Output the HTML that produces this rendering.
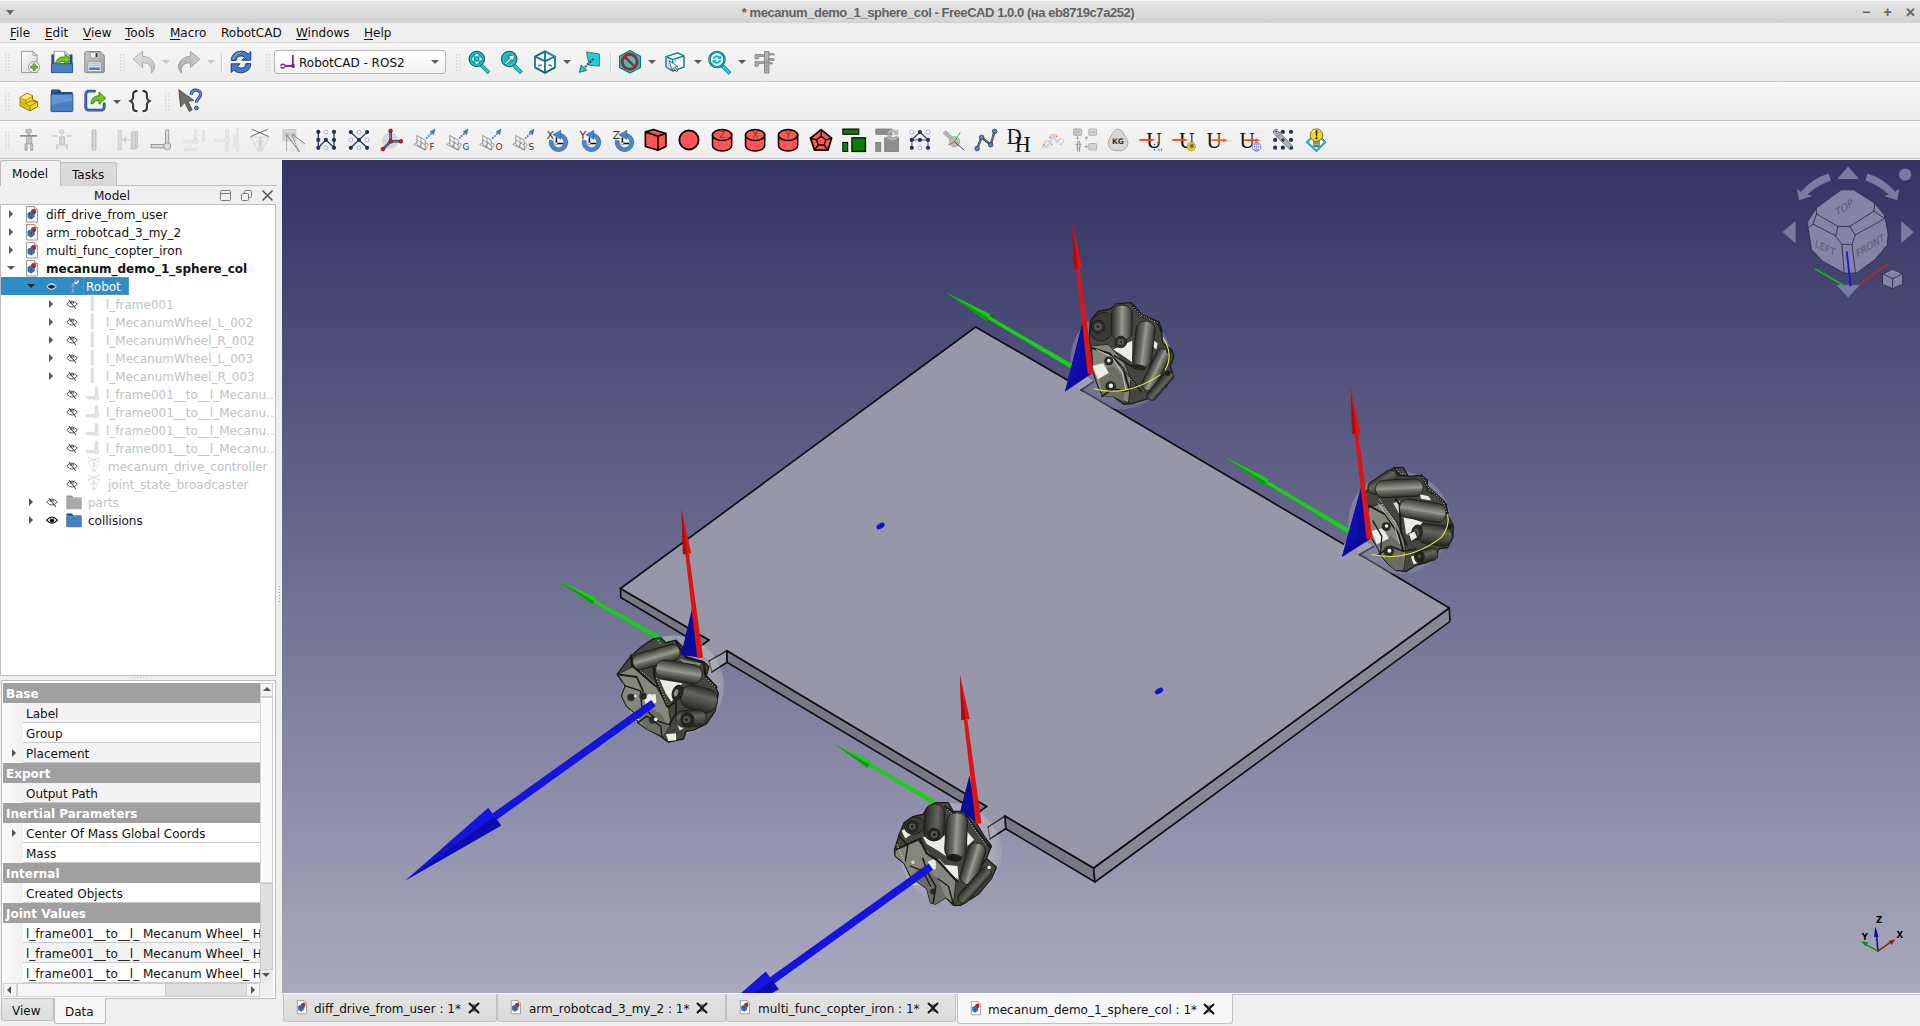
<!DOCTYPE html><html><head><meta charset="utf-8"><title>FreeCAD</title><style>
*{box-sizing:border-box}
html,body{margin:0;padding:0}
body{width:1920px;height:1026px;position:relative;overflow:hidden;background:#efefef;
 font-family:"DejaVu Sans","Liberation Sans",sans-serif;font-size:12px;color:#111;}
.abs{position:absolute}
.t{position:absolute;white-space:nowrap;line-height:14px;height:14px;margin-top:1px}
#title{left:0;top:0;width:1920px;height:23px;background:linear-gradient(#e4e4e4,#d3d3d3);border-top:1px solid #fcfcfc}
#title .tx{left:0;width:1876px;top:4px;text-align:center;font-family:"Liberation Sans","DejaVu Sans",sans-serif;font-weight:bold;font-size:13px;color:#626262;letter-spacing:-0.45px}
#menu{left:0;top:23px;width:1920px;height:19px;background:#efefef}
#menu .t{top:2px;font-size:12px}
#menu u{text-decoration:underline;text-underline-offset:1.5px}
.hl{position:absolute;left:0;width:1920px;height:1px}
.grip{position:absolute;width:5px;height:17px;background-image:radial-gradient(circle,#c2c2c2 0.8px,transparent 1px);background-size:3px 3px;background-position:0 0}
.ic{position:absolute;width:24px;height:24px;overflow:visible}
.dd{position:absolute;width:0;height:0;border-left:4px solid transparent;border-right:4px solid transparent;border-top:4px solid #5c5c5c}
.dd.dis{border-top-color:#c8c8c8}
</style></head><body><div id="title" class="abs"><div class="abs" style="left:6px;top:9px;width:0;height:0;border-left:4.5px solid transparent;border-right:4.5px solid transparent;border-top:5px solid #6a6a6a"></div><div class="t tx">* mecanum_demo_1_sphere_col - FreeCAD 1.0.0 (на eb8719c7a252)</div><div class="t" style="left:1862px;top:3px;font-size:14px;color:#666;font-weight:bold;font-family:'Liberation Sans',sans-serif">−</div><div class="t" style="left:1883.5px;top:3px;font-size:14px;color:#666;font-weight:bold;font-family:'Liberation Sans',sans-serif">+</div><div class="t" style="left:1904.500px;top:3.800px;font-size:13px;color:#666;font-weight:bold;font-family:'Liberation Sans',sans-serif">✕</div></div><div id="menu" class="abs"><div class="t" style="left:10px"><u>F</u>ile</div><div class="t" style="left:45px"><u>E</u>dit</div><div class="t" style="left:83px"><u>V</u>iew</div><div class="t" style="left:125px"><u>T</u>ools</div><div class="t" style="left:170px"><u>M</u>acro</div><div class="t" style="left:221px">RobotCAD</div><div class="t" style="left:296px"><u>W</u>indows</div><div class="t" style="left:364px"><u>H</u>elp</div></div><div class="abs" style="left:0;top:42px;width:1920px;height:39px;background:linear-gradient(#f6f6f6,#ececec)"></div><div class="abs" style="left:0;top:82px;width:1920px;height:38px;background:linear-gradient(#f6f6f6,#ececec)"></div><div class="abs" style="left:0;top:121px;width:1920px;height:37px;background:linear-gradient(#f6f6f6,#ececec)"></div><div class="hl" style="top:42px;background:#d9d9d9"></div><div class="hl" style="top:81px;background:#c6c6c6"></div><div class="hl" style="top:120px;background:#c6c6c6"></div><div class="hl" style="top:158px;background:#c3c3c3"></div><div class="hl" style="top:159px;background:#f3f3f3"></div><svg class="abs" style="left:5px;top:54px" width="6" height="18" viewBox="0 0 6 18"><rect x="0.2" y="0.2" width="1.100" height="1.100" fill="#c4c4c4"/><rect x="3.3000000000000003" y="0.2" width="1.100" height="1.100" fill="#c4c4c4"/><rect x="0.2" y="3.3000000000000003" width="1.100" height="1.100" fill="#c4c4c4"/><rect x="3.3000000000000003" y="3.3000000000000003" width="1.100" height="1.100" fill="#c4c4c4"/><rect x="0.2" y="6.4" width="1.100" height="1.100" fill="#c4c4c4"/><rect x="3.3000000000000003" y="6.4" width="1.100" height="1.100" fill="#c4c4c4"/><rect x="0.2" y="9.5" width="1.100" height="1.100" fill="#c4c4c4"/><rect x="3.3000000000000003" y="9.5" width="1.100" height="1.100" fill="#c4c4c4"/><rect x="0.2" y="12.6" width="1.100" height="1.100" fill="#c4c4c4"/><rect x="3.3000000000000003" y="12.6" width="1.100" height="1.100" fill="#c4c4c4"/><rect x="0.2" y="15.7" width="1.100" height="1.100" fill="#c4c4c4"/><rect x="3.3000000000000003" y="15.7" width="1.100" height="1.100" fill="#c4c4c4"/></svg><svg class="ic" style="left:18px;top:50px" viewBox="0 0 24 24"><defs><linearGradient id="pg" x1="0" y1="0" x2="1" y2="1"><stop offset="0" stop-color="#ffffff"/><stop offset="1" stop-color="#d4d4d4"/></linearGradient></defs><path d="M3.5 1.4h11.5l4 4v17.2h-15.5z" fill="url(#pg)" stroke="#8c8c8c" stroke-width="0.9"/><path d="M15 1.4v4h4z" fill="#f4f4f4" stroke="#8c8c8c" stroke-width="0.8"/><circle cx="16.1" cy="17.1" r="5.5" fill="#fbfbfb" stroke="#8e8e8e" stroke-width="0.9"/><path d="M16.1 13.4v7.4M12.4 17.1h7.4" stroke="#2f7a10" stroke-width="2.8"/><path d="M16.1 13.9v6.400M12.9 17.1h6.400" stroke="#6fd016" stroke-width="1.400"/></svg><svg class="ic" style="left:50px;top:50px" viewBox="0 0 24 24"><path d="M1.4 4.5h3v18h-3zM19.5 4.5h3v18h-3z" fill="#1d4a8c"/><path d="M4.2 1.3h10.3l4 3.6v11h-14.3z" fill="#fdfdfd" stroke="#8c8c8c" stroke-width="0.8"/><path d="M14.5 1.3v3.6h4z" fill="#e6e6e6" stroke="#8c8c8c" stroke-width="0.7"/><path d="M1.4 13.6h21.1v9h-21.1z" fill="#4a80c2" stroke="#1d4a8c" stroke-width="0.8"/><path d="M5.5 13.6c0.8-5 5-7.6 9.4-6.3l0.6-2.6 5.3 5.2-6.6 4.6 0.3-2.8c-2.4-0.6-4.8 0-6.2 1.9z" fill="#6fc81c" stroke="#2f7a10" stroke-width="0.9" stroke-linejoin="round"/></svg><svg class="ic" style="left:83px;top:50px" viewBox="0 0 24 24"><defs><linearGradient id="sg" x1="0" y1="0" x2="1" y2="1"><stop offset="0" stop-color="#c8c8c8"/><stop offset="1" stop-color="#a0a0a0"/></linearGradient></defs><path d="M3.400 1.500h13.800l4.100 4.100v15.500a1.600 1.600 0 0 1-1.600 1.600h-16.300a1.600 1.600 0 0 1-1.600-1.600v-18a1.600 1.600 0 0 1 1.600-1.600z" fill="url(#sg)" stroke="#7e7e7e" stroke-width="0.900"/><rect x="7.400" y="2.400" width="8.600" height="5.400" rx="0.500" fill="#efefef" stroke="#8a8a8a" stroke-width="0.600"/><rect x="12.600" y="3.200" width="2" height="3.800" fill="#333"/><rect x="4.800" y="11.800" width="13.400" height="9.800" rx="0.800" fill="#e8e8e8" stroke="#8a8a8a" stroke-width="0.700"/><path d="M6 13.800h11M6 15.600h11" stroke="#b0b0b0" stroke-width="0.900"/><rect x="6.200" y="17.400" width="10.600" height="2.600" fill="#3f7fc4"/></svg><svg class="abs" style="left:120px;top:54px" width="6" height="18" viewBox="0 0 6 18"><rect x="0.2" y="0.2" width="1.100" height="1.100" fill="#c4c4c4"/><rect x="3.3000000000000003" y="0.2" width="1.100" height="1.100" fill="#c4c4c4"/><rect x="0.2" y="3.3000000000000003" width="1.100" height="1.100" fill="#c4c4c4"/><rect x="3.3000000000000003" y="3.3000000000000003" width="1.100" height="1.100" fill="#c4c4c4"/><rect x="0.2" y="6.4" width="1.100" height="1.100" fill="#c4c4c4"/><rect x="3.3000000000000003" y="6.4" width="1.100" height="1.100" fill="#c4c4c4"/><rect x="0.2" y="9.5" width="1.100" height="1.100" fill="#c4c4c4"/><rect x="3.3000000000000003" y="9.5" width="1.100" height="1.100" fill="#c4c4c4"/><rect x="0.2" y="12.6" width="1.100" height="1.100" fill="#c4c4c4"/><rect x="3.3000000000000003" y="12.6" width="1.100" height="1.100" fill="#c4c4c4"/><rect x="0.2" y="15.7" width="1.100" height="1.100" fill="#c4c4c4"/><rect x="3.3000000000000003" y="15.7" width="1.100" height="1.100" fill="#c4c4c4"/></svg><svg class="ic" style="left:132px;top:50px" viewBox="0 0 24 24"><defs><linearGradient id="ug" x1="0" y1="0" x2="1" y2="1"><stop offset="0" stop-color="#e4e4e4"/><stop offset="1" stop-color="#c4c4c4"/></linearGradient></defs><path d="M1.2 9.2L10.6 1.2v5.2c7 0 12.4 5 11.8 10.8-0.3 2.6-1.6 4.6-3 5.9 1.2-6-1.6-10.6-8.8-10.4v5z" fill="url(#ug)" stroke="#a6a6a6" stroke-width="0.9" stroke-linejoin="round"/></svg><div class="dd dis" style="left:162px;top:60px"></div><svg class="ic" style="left:177px;top:50px" viewBox="0 0 24 24"><defs><linearGradient id="rdg" x1="1" y1="0" x2="0" y2="1"><stop offset="0" stop-color="#d0d0d0"/><stop offset="1" stop-color="#acacac"/></linearGradient></defs><path d="M22.8 9.2L13.4 1.2v5.2c-7 0-12.4 5-11.8 10.8 0.3 2.6 1.6 4.6 3 5.9-1.2-6 1.6-10.6 8.8-10.4v5z" fill="url(#rdg)" stroke="#9a9a9a" stroke-width="0.9" stroke-linejoin="round"/></svg><div class="dd dis" style="left:207px;top:60px"></div><div class="abs" style="left:221px;top:53px;width:1px;height:19px;background:#cdcdcd"></div><div class="abs" style="left:222px;top:53px;width:1px;height:19px;background:#fbfbfb"></div><svg class="ic" style="left:229px;top:50px" viewBox="0 0 24 24"><path d="M2.2 10.4c0-5.4 4.6-9.2 9.8-9.2 3 0 5.4 1 7.2 2.8l2.6-2.4v8.6h-9l3-2.8c-1-1-2.4-1.5-3.8-1.5-2.8 0-4.6 1.8-4.9 4.5z" fill="#3f80c4" stroke="#15305c" stroke-width="0.9" stroke-linejoin="round"/><path d="M21.8 13.6c0 5.4-4.6 9.2-9.8 9.2-3 0-5.4-1-7.2-2.8l-2.6 2.4v-8.6h9l-3 2.8c1 1 2.4 1.5 3.8 1.5 2.8 0 4.6-1.8 4.9-4.5z" fill="#3f80c4" stroke="#15305c" stroke-width="0.9" stroke-linejoin="round"/><path d="M4 9c1-4 4.4-6.4 8-6.4" stroke="#8fb8e4" stroke-width="1" fill="none"/></svg><svg class="abs" style="left:266px;top:54px" width="6" height="18" viewBox="0 0 6 18"><rect x="0.2" y="0.2" width="1.100" height="1.100" fill="#c4c4c4"/><rect x="3.3000000000000003" y="0.2" width="1.100" height="1.100" fill="#c4c4c4"/><rect x="0.2" y="3.3000000000000003" width="1.100" height="1.100" fill="#c4c4c4"/><rect x="3.3000000000000003" y="3.3000000000000003" width="1.100" height="1.100" fill="#c4c4c4"/><rect x="0.2" y="6.4" width="1.100" height="1.100" fill="#c4c4c4"/><rect x="3.3000000000000003" y="6.4" width="1.100" height="1.100" fill="#c4c4c4"/><rect x="0.2" y="9.5" width="1.100" height="1.100" fill="#c4c4c4"/><rect x="3.3000000000000003" y="9.5" width="1.100" height="1.100" fill="#c4c4c4"/><rect x="0.2" y="12.6" width="1.100" height="1.100" fill="#c4c4c4"/><rect x="3.3000000000000003" y="12.6" width="1.100" height="1.100" fill="#c4c4c4"/><rect x="0.2" y="15.7" width="1.100" height="1.100" fill="#c4c4c4"/><rect x="3.3000000000000003" y="15.7" width="1.100" height="1.100" fill="#c4c4c4"/></svg><div class="abs" style="left:274px;top:50px;width:172px;height:24px;border:1px solid #b4b4b4;border-radius:3px;background:linear-gradient(#ffffff,#f2f2f2)"></div><svg class="abs" style="left:280px;top:54px" width="16" height="16" viewBox="0 0 16 16"><path d="M12.800 1v11" stroke="#4a2a8a" stroke-width="1.700"/><path d="M12.800 1v11" stroke="#3a6ad0" stroke-width="0.700" stroke-dasharray="1.500 1.500"/><path d="M12.800 12h-6" stroke="#7a1a8a" stroke-width="1.800"/><circle cx="13" cy="12" r="1.900" fill="#8a1a8a"/><path d="M6.800 12c-1.500 0-2.200-1.200-3.400-1.600-1.200-0.400-2.200 0.200-2.400 1M6.800 12c-1.500 0-2.200 1.200-3.400 1.800-1 0.400-2 0.200-2.400-0.600" fill="none" stroke="#8a1a8a" stroke-width="1.400" stroke-linecap="round"/></svg><div class="t" style="left:299px;top:55px;font-size:12px">RobotCAD - ROS2</div><div class="dd" style="left:430.5px;top:60px"></div><svg class="abs" style="left:456px;top:54px" width="6" height="18" viewBox="0 0 6 18"><rect x="0.2" y="0.2" width="1.100" height="1.100" fill="#c4c4c4"/><rect x="3.3000000000000003" y="0.2" width="1.100" height="1.100" fill="#c4c4c4"/><rect x="0.2" y="3.3000000000000003" width="1.100" height="1.100" fill="#c4c4c4"/><rect x="3.3000000000000003" y="3.3000000000000003" width="1.100" height="1.100" fill="#c4c4c4"/><rect x="0.2" y="6.4" width="1.100" height="1.100" fill="#c4c4c4"/><rect x="3.3000000000000003" y="6.4" width="1.100" height="1.100" fill="#c4c4c4"/><rect x="0.2" y="9.5" width="1.100" height="1.100" fill="#c4c4c4"/><rect x="3.3000000000000003" y="9.5" width="1.100" height="1.100" fill="#c4c4c4"/><rect x="0.2" y="12.6" width="1.100" height="1.100" fill="#c4c4c4"/><rect x="3.3000000000000003" y="12.6" width="1.100" height="1.100" fill="#c4c4c4"/><rect x="0.2" y="15.7" width="1.100" height="1.100" fill="#c4c4c4"/><rect x="3.3000000000000003" y="15.7" width="1.100" height="1.100" fill="#c4c4c4"/></svg><svg class="ic" style="left:466.7px;top:50px" viewBox="0 0 24 24"><path d="M14.5 13.2l8.3 8.3-2.2 2.2-8.3-8.3z" fill="#22d0d4" stroke="#0b6d73" stroke-width="0.9" stroke-linejoin="round"/><circle cx="9.8" cy="9" r="7.6" fill="#22d0d4" stroke="#0b6d73" stroke-width="1.4"/><circle cx="9.8" cy="9" r="5.4" fill="#19b4ba" stroke="#0b6d73" stroke-width="0.6"/><path d="M9.8 3.6l2.2 2.6h-4.4zM9.8 14.4l2.2-2.6h-4.4zM4.4 9l2.6-2.2v4.4zM15.2 9l-2.6-2.2v4.4z" fill="#fff"/><rect x="8" y="7.2" width="3.6" height="3.6" fill="#22d0d4" stroke="#0b6d73" stroke-width="0.5"/></svg><svg class="ic" style="left:499.7px;top:50px" viewBox="0 0 24 24"><path d="M14 13.2l8.3 8.3-2.2 2.2-8.3-8.3z" fill="#22d0d4" stroke="#0b6d73" stroke-width="0.9" stroke-linejoin="round"/><circle cx="9.2" cy="9" r="7.6" fill="#22d0d4" stroke="#0b6d73" stroke-width="1.4"/><circle cx="9.2" cy="9" r="5.4" fill="#19b4ba"/><path d="M4.6 13.6l5.6-5.6-1.8-1.8 6.2-1.4-1.4 6.2-1.8-1.8-5.6 5.6z" fill="#fff" stroke="#444" stroke-width="0.7" stroke-linejoin="round"/></svg><svg class="ic" style="left:533px;top:50px" viewBox="0 0 24 24"><path d="M12 1.4l10 5.2v10.8l-10 5.4-10-5.4v-10.800z" fill="#fafafa" stroke="#0b6d73" stroke-width="1.9" stroke-linejoin="round"/><path d="M2 6.6l10 4.6 10-4.600M12 11.2v11.600M12 1.400v9" stroke="#0b6d73" stroke-width="1.7" fill="none"/><path d="M12 1.4l10 5.2v10.800M2 6.600v10.800" stroke="#22d0d4" stroke-width="0.6" fill="none"/><path d="M5.400 16.600c0.600-1.600 2-1.800 3.400-1.200M18.600 16.600c-0.600-1.600-2-1.800-3.400-1.200" stroke="#0b6d73" stroke-width="1.2" fill="none"/></svg><div class="dd" style="left:563px;top:60px"></div><svg class="ic" style="left:578.5px;top:50px" viewBox="0 0 24 24"><path d="M7.500 1.900l12.900 2.100v12.100l-10.400-0.850z" fill="#22d0d4" stroke="#4a6a70" stroke-width="0.900" stroke-linejoin="round"/><path d="M14.500 8.600l-8.600 8.500" stroke="#123" stroke-width="1.800" stroke-dasharray="2.200 1.200"/><path d="M14.500 8.600l-8.600 8.500" stroke="#22d0d4" stroke-width="0.700"/><path d="M0.400 22.300l1.800-7.200 5.600 5.200z" fill="#22d0d4" stroke="#1a4a50" stroke-width="0.800" stroke-linejoin="round"/></svg><div class="abs" style="left:610px;top:53px;width:1px;height:19px;background:#cdcdcd"></div><div class="abs" style="left:611px;top:53px;width:1px;height:19px;background:#fbfbfb"></div><svg class="ic" style="left:618px;top:50px" viewBox="0 0 24 24"><path d="M12 0.600l10.400 5.600v11.200l-10.400 5.600-10.400-5.600v-11.200z" fill="#22d0d4" stroke="#0b6d73" stroke-width="1.100" stroke-linejoin="round"/><path d="M12 2.400l8.800 4.700v9.400l-8.800 4.700-8.800-4.700v-9.400z" fill="none" stroke="#14a8b0" stroke-width="0.700"/><circle cx="11.700" cy="11.700" r="7.200" fill="none" stroke="#d41414" stroke-width="2.500"/><path d="M6.600 6.600l10.200 10.200" stroke="#d41414" stroke-width="2.500"/><circle cx="11.700" cy="11.700" r="8.500" fill="none" stroke="#6a0a0a" stroke-width="0.500"/></svg><div class="dd" style="left:648px;top:60px"></div><svg class="ic" style="left:663px;top:50px" viewBox="0 0 24 24"><g transform="translate(12 12) scale(0.9) translate(-12 -12.200)"><path d="M2 6.200l13-4.200 7 3.400v12.400l-12.600 4.400-7.400-4.400z" fill="#eaf6f8" stroke="#0b6d73" stroke-width="1.500" stroke-linejoin="round"/><path d="M2 6.200l7.400 3.400 12.600-4.200M9.400 9.600v12.600" stroke="#0b6d73" stroke-width="1.500" fill="none"/><path d="M2 6.200l13-4.200 7 3.400v12.400l-12.600 4.400-7.400-4.400z M9.400 9.600v12.600M2 6.200l7.400 3.400 12.600-4.200" fill="none" stroke="#22d0d4" stroke-width="0.500" stroke-dasharray="1.500 1.500"/><rect x="3.400" y="9.200" width="5" height="9.500" fill="#a8dce8" opacity="0.800"/><rect x="9.900" y="9.600" width="3" height="4" fill="#a8dce8"/><path d="M5.600 10.800l9.600 6.600-3.400 0.300 3.200 4.400-1.500 1-3-4.500-2 2.600z" fill="#f4f4f4" stroke="#3a3a4a" stroke-width="0.800" stroke-linejoin="round"/></g></svg><div class="dd" style="left:693.5px;top:60px"></div><svg class="ic" style="left:708px;top:50px" viewBox="0 0 24 24"><path d="M14.200 13.600l8.700 8.500-2.200 2.200-8.700-8.500z" fill="#22d0d4" stroke="#0b6d73" stroke-width="0.900" stroke-linejoin="round"/><circle cx="9" cy="9.500" r="7.600" fill="#f4fbfc" stroke="#0b6d73" stroke-width="2.400"/><circle cx="9" cy="9.500" r="7.600" fill="none" stroke="#22d0d4" stroke-width="0.800"/><path d="M4.800 8.800a4.300 4.300 0 0 1 7.200-2.400l1.400-1.300v4.200h-4.200l1.300-1.400a2.400 2.400 0 0 0-3.800 1z" fill="#19b4ba"/><path d="M13.200 10.200a4.300 4.300 0 0 1-7.200 2.400l-1.400 1.300v-4.200h4.200l-1.300 1.400a2.400 2.400 0 0 0 3.800-1z" fill="#19b4ba"/></svg><div class="dd" style="left:738px;top:60px"></div><svg class="ic" style="left:753px;top:50px" viewBox="0 0 24 24"><path d="M11.500 1.500h4.500v21.500h-4.500z" fill="#b4b4b4" stroke="#7a7a7a" stroke-width="0.800"/><path d="M2 4.500h9.500v2h-5.500l-1 2.500h-3zM2 11.500h9.500v2h-5.500l-1 2.800h-3z" fill="#a8a8a8" stroke="#7a7a7a" stroke-width="0.700"/><path d="M16 3.500h4.500l1 1.500h-5.500zM16 8.500h4.500l1 2h-5.500zM16 12.500h3l0.500 1.500h-3.500z" fill="#a8a8a8" stroke="#7a7a7a" stroke-width="0.600"/><path d="M12.500 10h1.500M12.500 12h2.500M12.500 14h1.500M12.500 16h2.500M12.500 18h1.500M12.500 20h2.500" stroke="#666" stroke-width="0.600"/></svg><svg class="abs" style="left:5px;top:93px" width="6" height="18" viewBox="0 0 6 18"><rect x="0.2" y="0.2" width="1.100" height="1.100" fill="#c4c4c4"/><rect x="3.3000000000000003" y="0.2" width="1.100" height="1.100" fill="#c4c4c4"/><rect x="0.2" y="3.3000000000000003" width="1.100" height="1.100" fill="#c4c4c4"/><rect x="3.3000000000000003" y="3.3000000000000003" width="1.100" height="1.100" fill="#c4c4c4"/><rect x="0.2" y="6.4" width="1.100" height="1.100" fill="#c4c4c4"/><rect x="3.3000000000000003" y="6.4" width="1.100" height="1.100" fill="#c4c4c4"/><rect x="0.2" y="9.5" width="1.100" height="1.100" fill="#c4c4c4"/><rect x="3.3000000000000003" y="9.5" width="1.100" height="1.100" fill="#c4c4c4"/><rect x="0.2" y="12.6" width="1.100" height="1.100" fill="#c4c4c4"/><rect x="3.3000000000000003" y="12.6" width="1.100" height="1.100" fill="#c4c4c4"/><rect x="0.2" y="15.7" width="1.100" height="1.100" fill="#c4c4c4"/><rect x="3.3000000000000003" y="15.7" width="1.100" height="1.100" fill="#c4c4c4"/></svg><svg class="ic" style="left:17px;top:89px" viewBox="0 0 24 24"><g transform="translate(12.000 13.000) scale(0.860) translate(-12.000 -13.800)"><path d="M1.700 8.200l8.200-4.600 6.200 3v4.200l5.900 2.800v5.800l-8.800 4.600-11.500-5.600z" fill="#f4d820" stroke="#8a6a08" stroke-width="1.100" stroke-linejoin="round"/><path d="M1.700 8.200l6.400 3.200 8-4.800M8.100 11.400v4.400M8.100 15.800l5.900-3.200 8 1M8.100 15.800l5.100 2.600 8.800-4.800M13.200 18.400v5.600M1.700 13.600l6.400 3" stroke="#8a6a08" stroke-width="1" fill="none"/><path d="M2.400 8.800l5.200 2.600v4.400l5 2.600v4.600l-10.200-5z" fill="#e0b810" opacity="0.800"/><path d="M9.900 4.200l5.600 2.700-7.400 4.400-5.600-2.800z" fill="#fbf080"/></g></svg><svg class="ic" style="left:50px;top:89px" viewBox="0 0 24 24"><path d="M1 1.600a1 1 0 0 1 1-1h7.500l2 2.400h11v4h-21.500z" fill="#1d4a8c"/><path d="M2.500 2.600h5" stroke="#4a80c2" stroke-width="0.900" stroke-dasharray="1.200 0.800"/><rect x="1" y="4.800" width="21.800" height="17.800" rx="0.800" fill="#4a80c2" stroke="#1d4a8c" stroke-width="0.900"/><path d="M1.500 6h20.800v6c-7 0.500-14 2-20.800 4z" fill="#6a9ad4" opacity="0.800"/></svg><svg class="ic" style="left:84px;top:89px" viewBox="0 0 24 24"><path d="M10.500 2.200h-5.700a3 3 0 0 0-3 3v13a3 3 0 0 0 3 3h12.400a3 3 0 0 0 3-3v-3.200" fill="none" stroke="#1d4a8c" stroke-width="2.800" stroke-linecap="round"/><path d="M10.500 2.200h-5.700a3 3 0 0 0-3 3v13a3 3 0 0 0 3 3h12.400a3 3 0 0 0 3-3v-3.200" fill="none" stroke="#4a80c2" stroke-width="1"/><path d="M7 14.600c0.400-5 3.600-7.800 8-7.800v-3.600l6.800 6-6.800 6v-3.800c-2.800-0.200-4.800 1-5.800 3.200z" fill="#6fc81c" stroke="#2f7a10" stroke-width="0.900" stroke-linejoin="round"/></svg><div class="dd" style="left:113px;top:99.5px"></div><svg class="ic" style="left:128px;top:89px" viewBox="0 0 24 24"><path d="M9.500 1.800c-3.600 0-4.400 1.400-4.400 3.800v2.800c0 1.800-0.800 2.600-2.600 2.600v2c1.800 0 2.600 0.800 2.600 2.600v2.800c0 2.400 0.800 3.800 4.400 3.800M14.500 1.800c3.600 0 4.400 1.400 4.400 3.800v2.800c0 1.800 0.800 2.600 2.600 2.600v2c-1.800 0-2.600 0.800-2.600 2.600v2.800c0 2.400-0.800 3.800-4.400 3.800" fill="none" stroke="#fff" stroke-width="4.200"/><path d="M9.500 1.800c-3.600 0-4.400 1.400-4.400 3.800v2.800c0 1.800-0.800 2.600-2.600 3.600 1.800 1 2.600 1.800 2.600 3.600v2.800c0 2.400 0.800 3.800 4.400 3.800M14.500 1.800c3.600 0 4.400 1.400 4.400 3.800v2.800c0 1.800 0.800 2.600 2.600 3.600-1.800 1-2.600 1.800-2.600 3.600v2.800c0 2.400-0.800 3.800-4.400 3.800" fill="none" stroke="#3a3a3a" stroke-width="2.200"/></svg><svg class="abs" style="left:165px;top:93px" width="6" height="18" viewBox="0 0 6 18"><rect x="0.2" y="0.2" width="1.100" height="1.100" fill="#c4c4c4"/><rect x="3.3000000000000003" y="0.2" width="1.100" height="1.100" fill="#c4c4c4"/><rect x="0.2" y="3.3000000000000003" width="1.100" height="1.100" fill="#c4c4c4"/><rect x="3.3000000000000003" y="3.3000000000000003" width="1.100" height="1.100" fill="#c4c4c4"/><rect x="0.2" y="6.4" width="1.100" height="1.100" fill="#c4c4c4"/><rect x="3.3000000000000003" y="6.4" width="1.100" height="1.100" fill="#c4c4c4"/><rect x="0.2" y="9.5" width="1.100" height="1.100" fill="#c4c4c4"/><rect x="3.3000000000000003" y="9.5" width="1.100" height="1.100" fill="#c4c4c4"/><rect x="0.2" y="12.6" width="1.100" height="1.100" fill="#c4c4c4"/><rect x="3.3000000000000003" y="12.6" width="1.100" height="1.100" fill="#c4c4c4"/><rect x="0.2" y="15.7" width="1.100" height="1.100" fill="#c4c4c4"/><rect x="3.3000000000000003" y="15.7" width="1.100" height="1.100" fill="#c4c4c4"/></svg><svg class="ic" style="left:177px;top:89px" viewBox="0 0 24 24"><path d="M1.800 0.600l15 10.800-6 0.800 4.400 8.600-3 1.600-4.400-8.800-4.200 4.400z" fill="#6e6e68" stroke="#444" stroke-width="0.800" stroke-linejoin="round"/><path d="M14.200 5.600c0.200-3 2.200-4.400 4.800-4.400 2.800 0 4.600 1.800 4.600 4.200 0 3.800-4.200 4-4.200 8" fill="none" stroke="#1d4a8c" stroke-width="3.200"/><path d="M14.200 5.600c0.200-3 2.200-4.400 4.800-4.400 2.800 0 4.600 1.800 4.600 4.200 0 3.800-4.200 4-4.200 8" fill="none" stroke="#5a90d0" stroke-width="1.600"/><circle cx="19.400" cy="19" r="1.900" fill="#5a90d0" stroke="#1d4a8c" stroke-width="0.900"/></svg><svg class="abs" style="left:5px;top:132px" width="6" height="18" viewBox="0 0 6 18"><rect x="0.2" y="0.2" width="1.100" height="1.100" fill="#c4c4c4"/><rect x="3.3000000000000003" y="0.2" width="1.100" height="1.100" fill="#c4c4c4"/><rect x="0.2" y="3.3000000000000003" width="1.100" height="1.100" fill="#c4c4c4"/><rect x="3.3000000000000003" y="3.3000000000000003" width="1.100" height="1.100" fill="#c4c4c4"/><rect x="0.2" y="6.4" width="1.100" height="1.100" fill="#c4c4c4"/><rect x="3.3000000000000003" y="6.4" width="1.100" height="1.100" fill="#c4c4c4"/><rect x="0.2" y="9.5" width="1.100" height="1.100" fill="#c4c4c4"/><rect x="3.3000000000000003" y="9.5" width="1.100" height="1.100" fill="#c4c4c4"/><rect x="0.2" y="12.6" width="1.100" height="1.100" fill="#c4c4c4"/><rect x="3.3000000000000003" y="12.6" width="1.100" height="1.100" fill="#c4c4c4"/><rect x="0.2" y="15.7" width="1.100" height="1.100" fill="#c4c4c4"/><rect x="3.3000000000000003" y="15.7" width="1.100" height="1.100" fill="#c4c4c4"/></svg><svg class="ic" style="left:17px;top:128px" viewBox="0 0 24 24"><rect x="9" y="1.300" width="5.300" height="3.800" rx="0.600" fill="#c4c4c4" stroke="#9a9a9a" stroke-width="0.700"/><rect x="3.300" y="7" width="16.700" height="1.700" fill="#8e8e8e"/><circle cx="11.650" cy="6.300" r="0.900" fill="#8e8e8e"/><rect x="9.600" y="8.600" width="5.200" height="7.300" fill="#c4c4c4" stroke="#9a9a9a" stroke-width="0.700"/><rect x="8" y="15.900" width="2.200" height="6.100" fill="#c4c4c4" stroke="#9a9a9a" stroke-width="0.600"/><rect x="13.700" y="15.900" width="2.200" height="6.100" fill="#c4c4c4" stroke="#9a9a9a" stroke-width="0.600"/><path d="M8 22h2.200M13.700 22h2.200" stroke="#8a8a8a" stroke-width="0.900"/></svg><svg class="ic" style="left:50px;top:128px" viewBox="0 0 24 24"><circle cx="11.500" cy="3.900" r="2.300" fill="#dedede" stroke="#c4c4c4" stroke-width="0.600"/><path d="M2.100 8h5.600M16.300 8h5.600" stroke="#cfcfcf" stroke-width="1.300"/><rect x="9.400" y="9.100" width="5.200" height="7.900" fill="#d2d2d2" stroke="#bcbcbc" stroke-width="0.700"/><path d="M9.400 9.100l2.600-1.500 2.600 1.500" fill="none" stroke="#bcbcbc" stroke-width="0.700"/><rect x="6.300" y="16.400" width="1.500" height="5.200" fill="#d8d8d8" stroke="#c8c8c8" stroke-width="0.500"/><rect x="16.200" y="16.400" width="1.500" height="5.200" fill="#d8d8d8" stroke="#c8c8c8" stroke-width="0.500"/><path d="M7.800 18h1.600M14.600 18h1.600" stroke="#c8c8c8" stroke-width="0.800"/></svg><svg class="ic" style="left:83px;top:128px" viewBox="0 0 24 24"><rect x="9.200" y="2" width="3.700" height="20" rx="0.600" fill="#d9d9d9" stroke="#a8a8a8" stroke-width="0.800"/><path d="M10.300 3v18" stroke="#c4c4c4" stroke-width="0.500" stroke-dasharray="1 1"/></svg><svg class="ic" style="left:116px;top:128px" viewBox="0 0 24 24"><rect x="2.250" y="2" width="3.100" height="20" rx="0.600" fill="#dedede" stroke="#c4c4c4" stroke-width="0.700"/><path d="M13.700 11.700h-5M7 11.700l2.600-2.200v4.400z" stroke="#cfcfcf" stroke-width="1.300" fill="#cfcfcf"/><path d="M15.300 4.400l2.200-1.200h4v16.600l-2.200 1.200h-4z" fill="#d4d4d4" stroke="#bcbcbc" stroke-width="0.700"/><path d="M19.300 4.400v16.600" stroke="#bcbcbc" stroke-width="0.600"/></svg><svg class="ic" style="left:149px;top:128px" viewBox="0 0 24 24"><rect x="16.600" y="2" width="3.200" height="13.500" fill="#dadada" stroke="#8a8a8a" stroke-width="0.800"/><rect x="2" y="16.400" width="14" height="3.400" fill="#dadada" stroke="#8a8a8a" stroke-width="0.800"/><circle cx="18.200" cy="18.200" r="3.600" fill="#dcdcdc" stroke="#8a8a8a" stroke-width="0.800"/></svg><svg class="ic" style="left:182px;top:128px" viewBox="0 0 24 24"><rect x="12.300" y="1.300" width="2.600" height="11" fill="#e6e6e6" stroke="#dadada" stroke-width="0.500"/><rect x="20.600" y="2.300" width="2.100" height="11" fill="#e6e6e6" stroke="#dadada" stroke-width="0.500"/><rect x="1.400" y="12.500" width="10.400" height="1.800" fill="#e6e6e6" stroke="#dadada" stroke-width="0.500"/><circle cx="13.500" cy="13.300" r="2.500" fill="#e8e8e8" stroke="#dadada" stroke-width="0.500"/><rect x="1.900" y="20.600" width="13" height="2" fill="#e6e6e6" stroke="#dadada" stroke-width="0.500"/><path d="M16.500 6l2.500 2.500M8 15.500l1.500 3" stroke="#dcdcdc" stroke-width="0.800"/></svg><svg class="ic" style="left:215px;top:128px" viewBox="0 0 24 24"><rect x="0.200" y="11.700" width="10.400" height="2.100" fill="#e6e6e6" stroke="#dcdcdc" stroke-width="0.500"/><rect x="10.600" y="1.300" width="3.100" height="22.400" fill="#e6e6e6" stroke="#dcdcdc" stroke-width="0.500"/><circle cx="12" cy="12.750" r="2.500" fill="#e8e8e8" stroke="#dadada" stroke-width="0.500"/><rect x="21.600" y="0.250" width="2" height="23.400" fill="#e6e6e6" stroke="#dcdcdc" stroke-width="0.500"/><rect x="18.400" y="7" width="2.100" height="11" fill="#e6e6e6" stroke="#dcdcdc" stroke-width="0.500"/><path d="M16 4.500l2 1.500M16 19l2 1.500" stroke="#dcdcdc" stroke-width="0.800"/></svg><svg class="ic" style="left:248px;top:128px" viewBox="0 0 24 24"><path d="M2.100 9.100l8.900 14.600M20.900 9.100l-7.900 14.600M2.100 9.100h18.800" stroke="#c6c6c6" stroke-width="0.700" fill="none"/><circle cx="12.200" cy="10.600" r="1.500" fill="#d4d4d4"/><rect x="10.600" y="12.200" width="3.200" height="6.400" fill="#d4d4d4"/><path d="M8.400 13.400h7.800" stroke="#d4d4d4" stroke-width="1.300"/><path d="M11.200 18.600v5M13.200 18.600v5" stroke="#d4d4d4" stroke-width="1.300"/><path d="M3.700 1.300l17.200 7.300M19.800 1.300l-17.200 7.300" stroke="#4a4a4a" stroke-width="0.800"/></svg><svg class="ic" style="left:281px;top:128px" viewBox="0 0 24 24"><rect x="9" y="12.750" width="14.800" height="11" fill="#e8e8e8"/><rect x="1.900" y="1.500" width="13" height="11.250" fill="#d6d6d6" stroke="#c0c0c0" stroke-width="0.700"/><ellipse cx="5.900" cy="6.700" rx="1.600" ry="1" fill="none" stroke="#8a8a8a" stroke-width="0.700"/><ellipse cx="11.800" cy="6.700" rx="1.600" ry="1" fill="none" stroke="#8a8a8a" stroke-width="0.700"/><path d="M5.600 7.500v16.200" stroke="#555" stroke-width="0.700" stroke-dasharray="1.200 0.800"/><path d="M6.100 7.500l12.500 16.200M12.300 7l11.500 8.900" stroke="#555" stroke-width="0.700"/><path d="M11.300 7.500l6.200 16.200" stroke="#555" stroke-width="0.700" stroke-dasharray="1.200 0.800"/></svg><svg class="ic" style="left:314px;top:128px" viewBox="0 0 24 24"><path d="M4.300 3.900v15.900M20 3.900v15.900M4.300 19.800l7.600-7.900 8.100 7.900" stroke="#1f3358" stroke-width="1.300" fill="none"/><circle cx="11.9" cy="4.1" r="2" fill="#fff" stroke="#8a94c0" stroke-width="0.700"/><circle cx="11.9" cy="19.8" r="2" fill="#fff" stroke="#8a94c0" stroke-width="0.700"/><circle cx="4.3" cy="3.9" r="2.100" fill="#1f3358"/><circle cx="4.3" cy="11.9" r="2.100" fill="#1f3358"/><circle cx="4.3" cy="19.8" r="2.100" fill="#1f3358"/><circle cx="20" cy="3.9" r="2.100" fill="#1f3358"/><circle cx="20" cy="11.9" r="2.100" fill="#1f3358"/><circle cx="20" cy="19.8" r="2.100" fill="#1f3358"/><circle cx="11.9" cy="11.9" r="2.100" fill="#1f3358"/></svg><svg class="ic" style="left:347px;top:128px" viewBox="0 0 24 24"><path d="M3.800 4.100l16.300 15.700M20.100 4.100l-16.300 15.700" stroke="#1f3358" stroke-width="1.300"/><circle cx="12" cy="4.1" r="2" fill="#fff" stroke="#8a94c0" stroke-width="0.700"/><circle cx="12" cy="19.8" r="2" fill="#fff" stroke="#8a94c0" stroke-width="0.700"/><circle cx="3.8" cy="11.9" r="2" fill="#fff" stroke="#8a94c0" stroke-width="0.700"/><circle cx="20.1" cy="11.9" r="2" fill="#fff" stroke="#8a94c0" stroke-width="0.700"/><circle cx="3.8" cy="4.1" r="2.100" fill="#1f3358"/><circle cx="20.1" cy="4.1" r="2.100" fill="#1f3358"/><circle cx="3.8" cy="19.8" r="2.100" fill="#1f3358"/><circle cx="20.1" cy="19.8" r="2.100" fill="#1f3358"/><rect x="10.100" y="10" width="3.800" height="3.800" fill="#1f3358"/></svg><svg class="ic" style="left:380px;top:128px" viewBox="0 0 24 24"><circle cx="10.200" cy="12.750" r="8.300" fill="#d6d6d6"/><path d="M10.700 13.300v-10.450M10.700 13.300h10.100M10.700 13.300l-7.800 7.800" stroke="#1f3358" stroke-width="2.600" stroke-linecap="round"/><path d="M10.700 13.300v-10.450M10.700 13.300h10.100M10.700 13.300l-7.800 7.800" stroke="#4a86c8" stroke-width="1.300"/><circle cx="10.700" cy="13.300" r="1.900" fill="#e81010" stroke="#6a0808" stroke-width="0.600"/><circle cx="10.500" cy="2.850" r="1.900" fill="#e81010" stroke="#6a0808" stroke-width="0.600"/><circle cx="20.800" cy="13.300" r="1.900" fill="#e81010" stroke="#6a0808" stroke-width="0.600"/><circle cx="2.900" cy="21.100" r="1.900" fill="#e81010" stroke="#6a0808" stroke-width="0.600"/></svg><svg class="ic" style="left:413px;top:128px" viewBox="0 0 24 24"><path d="M3.850 7.500l8.350 4.700v9.900l-8.350-5.700z" fill="#f4f4f4" stroke="#6e6e6e" stroke-width="0.700" stroke-linejoin="round"/><path d="M0.700 16.400l3.150-1.800M12.200 14.700l3.100 1.700-3.100 5.700-11.500-5.700M8 9.900v9.400M3.850 12l8.350 5M6.500 19.300l2.800-5.300" fill="none" stroke="#6e6e6e" stroke-width="0.600"/><path d="M13.200 10.700l6-6.200" stroke="#3f7ac0" stroke-width="1.700" stroke-dasharray="1.800 1"/><path d="M22.100 1.100l-4.900 2.600 3.300 3z" fill="#3f7ac0" stroke="#2a5a98" stroke-width="0.500"/><text x="16.500" y="22.400" font-family="DejaVu Sans,Liberation Sans,sans-serif" font-size="8.800" fill="#3a3a3a">F</text></svg><svg class="ic" style="left:446px;top:128px" viewBox="0 0 24 24"><path d="M3.850 7.500l8.350 4.700v9.900l-8.350-5.700z" fill="#f4f4f4" stroke="#6e6e6e" stroke-width="0.700" stroke-linejoin="round"/><path d="M0.700 16.400l3.150-1.800M12.200 14.700l3.100 1.700-3.100 5.700-11.500-5.700M8 9.900v9.400M3.850 12l8.350 5M6.500 19.300l2.800-5.300" fill="none" stroke="#6e6e6e" stroke-width="0.600"/><path d="M13.200 10.700l6-6.200" stroke="#3f7ac0" stroke-width="1.700" stroke-dasharray="1.800 1"/><path d="M22.100 1.100l-4.900 2.600 3.300 3z" fill="#3f7ac0" stroke="#2a5a98" stroke-width="0.500"/><text x="16.500" y="22.400" font-family="DejaVu Sans,Liberation Sans,sans-serif" font-size="8.800" fill="#3a3a3a">G</text></svg><svg class="ic" style="left:479px;top:128px" viewBox="0 0 24 24"><path d="M3.850 7.500l8.350 4.700v9.900l-8.350-5.700z" fill="#f4f4f4" stroke="#6e6e6e" stroke-width="0.700" stroke-linejoin="round"/><path d="M0.700 16.400l3.150-1.800M12.200 14.700l3.100 1.700-3.100 5.700-11.500-5.700M8 9.900v9.400M3.850 12l8.350 5M6.500 19.300l2.800-5.300" fill="none" stroke="#6e6e6e" stroke-width="0.600"/><path d="M13.200 10.700l6-6.200" stroke="#3f7ac0" stroke-width="1.700" stroke-dasharray="1.800 1"/><path d="M22.100 1.100l-4.900 2.600 3.300 3z" fill="#3f7ac0" stroke="#2a5a98" stroke-width="0.500"/><text x="16.500" y="22.400" font-family="DejaVu Sans,Liberation Sans,sans-serif" font-size="8.800" fill="#3a3a3a">O</text></svg><svg class="ic" style="left:512px;top:128px" viewBox="0 0 24 24"><path d="M3.850 7.500l8.350 4.700v9.900l-8.350-5.700z" fill="#f4f4f4" stroke="#6e6e6e" stroke-width="0.700" stroke-linejoin="round"/><path d="M0.700 16.400l3.150-1.800M12.200 14.700l3.100 1.700-3.100 5.700-11.500-5.700M8 9.900v9.400M3.850 12l8.350 5M6.500 19.300l2.800-5.300" fill="none" stroke="#6e6e6e" stroke-width="0.600"/><path d="M13.200 10.700l6-6.200" stroke="#3f7ac0" stroke-width="1.700" stroke-dasharray="1.800 1"/><path d="M22.100 1.100l-4.900 2.600 3.300 3z" fill="#3f7ac0" stroke="#2a5a98" stroke-width="0.500"/><text x="16.500" y="22.400" font-family="DejaVu Sans,Liberation Sans,sans-serif" font-size="8.800" fill="#3a3a3a">S</text></svg><svg class="ic" style="left:545px;top:128px" viewBox="0 0 24 24"><path d="M4.52 11.89A9.3 9.3 0 1 0 15.43 5.20L14.62 9.02A5.4 5.4 0 1 1 8.28 12.90z" fill="#4a86c8" stroke="#2a5a98" stroke-width="0.600"/><path d="M15.70 2.40L15.70 11.30L7.90 6.65z" fill="#4a86c8" stroke="#2a5a98" stroke-width="0.600" stroke-linejoin="round"/><path d="M11.400 9.400v6h6.800" fill="none" stroke="#111" stroke-width="1.500"/><circle cx="11.200" cy="15.600" r="1.300" fill="#fff" stroke="#444" stroke-width="0.500"/><text x="1.6" y="10.800" font-family="DejaVu Sans,Liberation Sans,sans-serif" font-size="11" fill="#333">X</text></svg><svg class="ic" style="left:578px;top:128px" viewBox="0 0 24 24"><path d="M4.52 11.89A9.3 9.3 0 1 0 15.43 5.20L14.62 9.02A5.4 5.4 0 1 1 8.28 12.90z" fill="#4a86c8" stroke="#2a5a98" stroke-width="0.600"/><path d="M15.70 2.40L15.70 11.30L7.90 6.65z" fill="#4a86c8" stroke="#2a5a98" stroke-width="0.600" stroke-linejoin="round"/><path d="M11.400 9.400v6h6.800" fill="none" stroke="#111" stroke-width="1.500"/><circle cx="11.200" cy="15.600" r="1.300" fill="#fff" stroke="#444" stroke-width="0.500"/><text x="1.6" y="10.800" font-family="DejaVu Sans,Liberation Sans,sans-serif" font-size="11" fill="#333">Y</text></svg><svg class="ic" style="left:611px;top:128px" viewBox="0 0 24 24"><path d="M4.52 11.89A9.3 9.3 0 1 0 15.43 5.20L14.62 9.02A5.4 5.4 0 1 1 8.28 12.90z" fill="#4a86c8" stroke="#2a5a98" stroke-width="0.600"/><path d="M15.70 2.40L15.70 11.30L7.90 6.65z" fill="#4a86c8" stroke="#2a5a98" stroke-width="0.600" stroke-linejoin="round"/><path d="M11.400 9.400v6h6.800" fill="none" stroke="#111" stroke-width="1.500"/><circle cx="11.200" cy="15.600" r="1.300" fill="#fff" stroke="#444" stroke-width="0.500"/><text x="1.6" y="10.800" font-family="DejaVu Sans,Liberation Sans,sans-serif" font-size="11" fill="#333">Z</text></svg><svg class="ic" style="left:644px;top:128px" viewBox="0 0 24 24"><path d="M1.400 3.900l8-2.400 12.500 4v13l-8 3.800-12.500-3.800z" fill="#ff5555" stroke="#000" stroke-width="1.700" stroke-linejoin="round"/><path d="M1.400 3.900l12.500 4.200 8-2.600M13.900 8.100v14.200" fill="none" stroke="#000" stroke-width="1.700" stroke-linejoin="round"/></svg><svg class="ic" style="left:677px;top:128px" viewBox="0 0 24 24"><circle cx="12" cy="11.900" r="9.600" fill="#ff5555" stroke="#000" stroke-width="1.800"/></svg><svg class="ic" style="left:710px;top:128px" viewBox="0 0 24 24"><path d="M2.500 7v10.400a9.600 5.700 0 0 0 19.200 0v-10.400z" fill="#ff5555" stroke="#000" stroke-width="1.500"/><ellipse cx="12.100" cy="7" rx="9.600" ry="5.600" fill="#ff5555" stroke="#000" stroke-width="1.500"/><text x="12.100" y="10.200" font-family="DejaVu Sans,Liberation Sans,sans-serif" font-size="8.600" fill="#5a4820" text-anchor="middle">Z</text></svg><svg class="ic" style="left:743px;top:128px" viewBox="0 0 24 24"><path d="M2.500 7v10.400a9.600 5.700 0 0 0 19.200 0v-10.400z" fill="#ff5555" stroke="#000" stroke-width="1.500"/><ellipse cx="12.100" cy="7" rx="9.600" ry="5.600" fill="#ff5555" stroke="#000" stroke-width="1.500"/><text x="12.100" y="10.200" font-family="DejaVu Sans,Liberation Sans,sans-serif" font-size="8.600" fill="#5a4820" text-anchor="middle">X</text></svg><svg class="ic" style="left:776px;top:128px" viewBox="0 0 24 24"><path d="M2.500 7v10.400a9.600 5.700 0 0 0 19.200 0v-10.400z" fill="#ff5555" stroke="#000" stroke-width="1.500"/><ellipse cx="12.100" cy="7" rx="9.600" ry="5.600" fill="#ff5555" stroke="#000" stroke-width="1.500"/><text x="12.100" y="10.200" font-family="DejaVu Sans,Liberation Sans,sans-serif" font-size="8.600" fill="#5a4820" text-anchor="middle">Y</text></svg><svg class="ic" style="left:809px;top:128px" viewBox="0 0 24 24"><path d="M12.200 1.700l10.500 8.400-3.700 12h-13.600l-4-12z" fill="#ff5555" stroke="#000" stroke-width="1.700" stroke-linejoin="round"/><path d="M12.200 8.200l4.600 3.600-1.700 5.200h-5.800l-1.800-5.200z" fill="#ff5555" stroke="#000" stroke-width="1.300" stroke-linejoin="round"/><path d="M12.200 1.700v6.500M22.700 10.100l-5.900 1.700M19 22.100l-3.900-5.100M5.400 22.100l3.900-5.100M1.400 10.100l6.100 1.700" stroke="#000" stroke-width="1.300"/></svg><svg class="ic" style="left:842px;top:128px" viewBox="0 0 24 24"><rect x="0.800" y="1" width="16" height="5.300" fill="#0a800a" stroke="#000" stroke-width="1"/><path d="M2 1.800h14" stroke="#000" stroke-width="0.500" stroke-dasharray="1 1"/><rect x="0.800" y="14.400" width="4.900" height="9" fill="#0a800a" stroke="#000" stroke-width="1"/><rect x="9.900" y="9.800" width="13.600" height="13.700" fill="#0a800a" stroke="#000" stroke-width="1.200"/><path d="M22.600 10.500v12.500M10.500 22.800h12" stroke="#000" stroke-width="0.500" stroke-dasharray="1 1"/></svg><svg class="ic" style="left:875px;top:128px" viewBox="0 0 24 24"><rect x="0.800" y="1" width="16" height="5.300" fill="#8e8e8e" stroke="#7a7a7a" stroke-width="0.800"/><rect x="0.800" y="14.400" width="4.900" height="9" fill="#8e8e8e" stroke="#7a7a7a" stroke-width="0.800"/><rect x="9.700" y="9.800" width="13.800" height="13.700" fill="#8e8e8e" stroke="#7a7a7a" stroke-width="0.800"/><path d="M12.500 5.500a5.500 5.500 0 0 1 9-2.500l1.500-1.500v5h-5l1.700-1.700a3 3 0 0 0-4.700 1z" fill="#bcbcbc" stroke="#a4a4a4" stroke-width="0.400"/><path d="M23 8.500a5.500 5.500 0 0 1-9 2.500l-1.500 1.500v-5h5l-1.700 1.700a3 3 0 0 0 4.700-1z" fill="#b4b4b4" stroke="#a0a0a0" stroke-width="0.400"/></svg><svg class="ic" style="left:908px;top:128px" viewBox="0 0 24 24"><path d="M3.800 11.900h16.200M3.800 11.900v7.900M20 11.900v7.900" stroke="#8a8ac4" stroke-width="1.700" fill="none"/><path d="M3.800 11.900l8.100-7.800 8.100 7.800" stroke="#1f3358" stroke-width="1.200" fill="none"/><circle cx="3.8" cy="4.1" r="2" fill="#fff" stroke="#8a94c0" stroke-width="0.700"/><circle cx="20" cy="4.1" r="2" fill="#fff" stroke="#8a94c0" stroke-width="0.700"/><circle cx="11.9" cy="19.8" r="2" fill="#fff" stroke="#8a94c0" stroke-width="0.700"/><circle cx="11.9" cy="4.1" r="2.100" fill="#1f3358"/><circle cx="3.8" cy="11.9" r="2.100" fill="#1f3358"/><circle cx="11.9" cy="11.9" r="2.100" fill="#1f3358"/><circle cx="20" cy="11.9" r="2.100" fill="#1f3358"/><circle cx="3.8" cy="19.8" r="2.100" fill="#1f3358"/><circle cx="20" cy="19.8" r="2.100" fill="#1f3358"/></svg><svg class="ic" style="left:941px;top:128px" viewBox="0 0 24 24"><path d="M2 5.200l2.400-2.600 10 8.800-2.400 2.600z" fill="#b4b4b4" stroke="#9a9a9a" stroke-width="0.600"/><circle cx="13.500" cy="13.800" r="5.200" fill="#bcbcbc" stroke="#a0a0a0" stroke-width="0.700"/><path d="M13.500 13.800l5.750-9.400" stroke="#18c018" stroke-width="0.900"/><path d="M13.500 13.800l-6.200 3.300" stroke="#f04020" stroke-width="0.900"/><path d="M13.500 13.800l9.900 8.500" stroke="#2020f0" stroke-width="0.900"/></svg><svg class="ic" style="left:974px;top:128px" viewBox="0 0 24 24"><path d="M3.100 20.600l4.500-11.200 9.100 7.300 3.900-13.300" fill="none" stroke="#4a4a4a" stroke-width="2.400" stroke-linejoin="round"/><path d="M3.100 20.600l4.500-11.200 9.100 7.300 3.900-13.300" fill="none" stroke="#b0b0b0" stroke-width="0.800" stroke-dasharray="1 1"/><circle cx="3.1" cy="20.6" r="2.300" fill="#4a86c8" stroke="#1f3358" stroke-width="0.700"/><circle cx="7.6" cy="9.4" r="2.300" fill="#4a86c8" stroke="#1f3358" stroke-width="0.700"/><circle cx="16.7" cy="16.7" r="2.300" fill="#4a86c8" stroke="#1f3358" stroke-width="0.700"/><circle cx="20.6" cy="3.4" r="2.300" fill="#4a86c8" stroke="#1f3358" stroke-width="0.700"/></svg><svg class="ic" style="left:1007px;top:128px" viewBox="0 0 24 24"><text x="-0.300" y="16.300" font-family="Liberation Serif,DejaVu Serif,serif" font-size="23" fill="#111" textLength="15" lengthAdjust="spacingAndGlyphs">D</text><text x="7.800" y="23.600" font-family="Liberation Serif,DejaVu Serif,serif" font-size="23" fill="#111" textLength="16" lengthAdjust="spacingAndGlyphs">H</text></svg><svg class="ic" style="left:1040px;top:128px" viewBox="0 0 24 24"><path d="M1.500 18.500h6l5.500-10.500 4 6 3-2" fill="none" stroke="#ccd6ea" stroke-width="2.400" stroke-linejoin="round"/><path d="M4 16.500a3.800 3.800 0 0 1 7.600 0M10 9a3.600 3.600 0 0 1 6.500-1M18 12a3 3 0 1 1 1 4" fill="none" stroke="#f0b088" stroke-width="0.900"/><circle cx="4" cy="16.800" r="0.800" fill="#f06060"/><circle cx="11.600" cy="16.800" r="0.800" fill="#f06060"/><circle cx="10" cy="9.400" r="0.800" fill="#f06060"/><circle cx="16.500" cy="8.400" r="0.800" fill="#f06060"/></svg><svg class="ic" style="left:1073px;top:128px" viewBox="0 0 24 24"><rect x="0.600" y="0.900" width="8" height="6.500" rx="1" fill="#c8c8c8" stroke="#9a9a9a" stroke-width="0.700"/><rect x="15.700" y="0.900" width="8" height="6.500" rx="1" fill="#d2d2d2" stroke="#a4a4a4" stroke-width="0.700"/><rect x="15.700" y="15.500" width="8" height="6.500" rx="1" fill="#d2d2d2" stroke="#a4a4a4" stroke-width="0.700"/><path d="M2 4h5M17 4h5" stroke="#9a9a9a" stroke-width="0.800" stroke-dasharray="1 0.600"/><path d="M4.600 8.200v2.600M3.600 9.800l1 1.200 1-1.200M15 18.700h-2.600M13.400 17.700l-1.200 1 1.200 1M13.300 10.300l1-1" stroke="#7a7a7a" stroke-width="0.800" fill="none"/><circle cx="13.300" cy="10" r="0.900" fill="none" stroke="#7a7a7a" stroke-width="0.600"/><circle cx="5.600" cy="14.200" r="1.100" fill="none" stroke="#7a7a7a" stroke-width="0.700"/><path d="M2.400 16.200h6.400M4.300 16.200v4M6.900 16.200v4M4.300 20.200h2.600M4.600 20.200v3.500M6.600 20.200v3.500" stroke="#7a7a7a" stroke-width="0.800" fill="none"/></svg><svg class="ic" style="left:1106px;top:128px" viewBox="0 0 24 24"><path d="M12 1.200c2.800 0 4.600 1.600 5.600 4.400 1 2.800 4.300 5.600 4.300 9.600 0 4.600-4 7.600-9.900 7.600s-9.900-3-9.900-7.600c0-4 3.300-6.800 4.300-9.600 1-2.800 2.800-4.400 5.600-4.400z" fill="#d8d8d8" stroke="#9c9c9c" stroke-width="0.800"/><text x="12" y="16.100" font-family="DejaVu Sans,Liberation Sans,sans-serif" font-size="7.600" font-weight="bold" fill="#333" text-anchor="middle">KG</text></svg><svg class="ic" style="left:1139px;top:128px" viewBox="0 0 24 24"><text x="7.3" y="20.300" font-family="Liberation Serif,DejaVu Serif,serif" font-size="24" fill="#111" textLength="15.6" lengthAdjust="spacingAndGlyphs">U</text><path d="M0.500 11.900h14.500" stroke="#ff4500" stroke-width="1.900"/><path d="M14 11.900h2.400" stroke="#f8c040" stroke-width="1.500"/><path d="M15.500 16.500h0.010M19 16.500h0.010M17.300 18.700h0.010M15.500 21.800h0.010M19.800 21.800h0.010M22.500 21.800h0.010M18.800 14.800h0.010" stroke="#26388a" stroke-width="1.400" stroke-linecap="round"/></svg><svg class="ic" style="left:1172px;top:128px" viewBox="0 0 24 24"><text x="7" y="20.300" font-family="Liberation Serif,DejaVu Serif,serif" font-size="24" fill="#111" textLength="15.6" lengthAdjust="spacingAndGlyphs">U</text><path d="M0.300 11.900h14.500" stroke="#ff4500" stroke-width="1.900"/><path d="M14 11.900h2.400" stroke="#f8c040" stroke-width="1.500"/><circle cx="19.200" cy="18.500" r="4.300" fill="#e8c818" stroke="#a8880a" stroke-width="1" stroke-dasharray="1.600 1"/><circle cx="19.200" cy="18.500" r="3.300" fill="#e8c818"/><circle cx="19.800" cy="18" r="1.700" fill="#4a80c8" stroke="#2a4a88" stroke-width="0.500"/></svg><svg class="ic" style="left:1205px;top:128px" viewBox="0 0 24 24"><text x="1.6" y="20.300" font-family="Liberation Serif,DejaVu Serif,serif" font-size="24" fill="#111" textLength="15.3" lengthAdjust="spacingAndGlyphs">U</text><path d="M6.700 12.200h12.500" stroke="#ff4500" stroke-width="1.700"/><path d="M18.200 10.200l4.500 2-4.500 2z" fill="#ff5a10"/><path d="M6.700 12.200h12" stroke="#f8a040" stroke-width="0.500"/></svg><svg class="ic" style="left:1238px;top:128px" viewBox="0 0 24 24"><text x="1.4" y="20.300" font-family="Liberation Serif,DejaVu Serif,serif" font-size="24" fill="#111" textLength="15.3" lengthAdjust="spacingAndGlyphs">U</text><path d="M6.100 12.200h12.500" stroke="#ff4500" stroke-width="1.700"/><path d="M17.600 10.200l4.500 2-4.500 2z" fill="#ff5a10"/><circle cx="18.500" cy="18.800" r="4.300" fill="#fff" stroke="#6a6ac8" stroke-width="0.900"/><path d="M14.200 18.800h8.600M18.500 14.500v8.600M15.500 15.800q3 1.600 6 0M15.500 21.800q3-1.600 6 0" stroke="#7a7ad0" stroke-width="0.600" fill="none"/><ellipse cx="18.500" cy="18.800" rx="2" ry="4.300" fill="none" stroke="#7a7ad0" stroke-width="0.600"/></svg><svg class="ic" style="left:1271px;top:128px" viewBox="0 0 24 24"><circle cx="4.1" cy="3.8" r="2.100" fill="#1f3358"/><circle cx="4.1" cy="11.9" r="2.100" fill="#1f3358"/><circle cx="4.1" cy="19.7" r="2.100" fill="#1f3358"/><circle cx="11.9" cy="3.8" r="2.100" fill="#1f3358"/><circle cx="11.9" cy="11.9" r="2.100" fill="#1f3358"/><circle cx="11.9" cy="19.7" r="2.100" fill="#1f3358"/><circle cx="20" cy="3.8" r="2.100" fill="#1f3358"/><circle cx="20" cy="11.9" r="2.100" fill="#1f3358"/><circle cx="20" cy="19.7" r="2.100" fill="#1f3358"/><path d="M4.600 4.400l2.600-1.400 13.800 14.200a2.300 2.300 0 0 1-3.200 3.200l-14.200-13.600z" fill="#b0b0b0" stroke="#6a6a8a" stroke-width="0.700" stroke-linejoin="round"/><path d="M2.200 4.800a3.300 3.300 0 0 1 4.600-3.400l-2.200 2.200 0.800 1.600 1.800 0.400 2-2a3.300 3.300 0 0 1-4 4.400" fill="#b0b0b0" stroke="#6a6a8a" stroke-width="0.700"/><circle cx="11.9" cy="11.9" r="1.600" fill="#1f3358"/><circle cx="20" cy="19.7" r="1.500" fill="#1f3358"/></svg><svg class="ic" style="left:1304px;top:128px" viewBox="0 0 24 24"><path d="M12.500 5.500l8.600 8.600-8.600 8.700-9.300-8.700z" fill="#fdfdfd" stroke="#1cbcc4" stroke-width="2" stroke-linejoin="round"/><path d="M12.500 4.500l9.600 9.600-9.600 9.700-10.300-9.700z" fill="none" stroke="#0b6d73" stroke-width="0.500"/><rect x="9.600" y="12.500" width="5.800" height="6.400" rx="1.200" fill="#7a7a7a" stroke="#4a4a4a" stroke-width="0.600"/><path d="M9.800 14.800h5.400M9.800 16.600h5.400" stroke="#c4c4c4" stroke-width="0.700"/><circle cx="12.500" cy="7.100" r="6.300" fill="#f0d818" stroke="#8a6a08" stroke-width="0.900"/><path d="M8.500 4.500a4.600 4.600 0 0 1 3-2.200" stroke="#fdf8a0" stroke-width="1.200" fill="none"/><path d="M11.600 2.400h1.900l-0.500 6h-0.900z" fill="#111"/><circle cx="12.550" cy="10.200" r="1" fill="#111"/></svg><div class="abs" style="left:0;top:160px;width:277px;height:866px;background:#efefef"></div><div class="abs" style="left:0;top:185px;width:277px;height:1px;background:#c2c2c2"></div><div class="abs" style="left:60px;top:162px;width:57px;height:24px;background:linear-gradient(#dedede,#d6d6d6);border:1px solid #bdbdbd;border-bottom:none;border-radius:3px 3px 0 0"></div><div class="t" style="left:72px;top:167px;font-size:12px">Tasks</div><div class="abs" style="left:0;top:160px;width:61px;height:26px;background:#f1f1f1;border:1px solid #bdbdbd;border-bottom:none;border-radius:3px 3px 0 0"></div><div class="t" style="left:12px;top:166px;font-size:12px">Model</div><div class="t" style="left:94px;top:188px;font-size:12px">Model</div><svg class="abs" style="left:220px;top:190px;overflow:visible" width="11" height="11" viewBox="0 0 11 11"><rect x="0.5" y="0.5" width="10" height="10" rx="1" fill="none" stroke="#7a7a7a" stroke-width="1"/><path d="M0.5 3.5h10" stroke="#7a7a7a"/></svg><svg class="abs" style="left:241px;top:190px;overflow:visible" width="11" height="11" viewBox="0 0 11 11"><rect x="3.5" y="0.5" width="7" height="7" rx="1" fill="none" stroke="#7a7a7a"/><rect x="0.5" y="3.5" width="7" height="7" rx="1" fill="#efefef" stroke="#7a7a7a"/></svg><svg class="abs" style="left:262px;top:190px;overflow:visible" width="11" height="11" viewBox="0 0 11 11"><path d="M1 1L10 10M10 1L1 10" stroke="#555" stroke-width="1.6" stroke-linecap="round"/></svg><div class="abs" style="left:0px;top:204px;width:276px;height:472px;background:#fff;border:1px solid #bcbcbc"></div><div class="abs" style="left:9px;top:210px;width:0;height:0;border-top:4px solid transparent;border-bottom:4px solid transparent;border-left:4.2px solid #555"></div><svg class="abs" style="left:25px;top:205.7px;overflow:visible" width="13" height="16" viewBox="0 0 13 16"><path d="M1.5 0.5h8l3 3v12.5h-11z" fill="#fdfdfd" stroke="#8a8a8a" stroke-width="0.9"/><path d="M9.5 0.5v3h3" fill="#e8e8e8" stroke="#8a8a8a" stroke-width="0.8"/><circle cx="8.6" cy="5.6" r="2.6" fill="#e01818"/><path d="M3 7.2l3.2-1.5 3 1.3v4l-3 2-3.2-1.6z" fill="#3d78c0" stroke="#1d4478" stroke-width="0.7"/><path d="M3 7.2l3.2 1.6 3-1.8M6.2 8.8v4.2" fill="none" stroke="#1d4478" stroke-width="0.6"/></svg><div class="t" style="left:46px;top:207px;font-size:12px;">diff_drive_from_user</div><div class="abs" style="left:9px;top:228px;width:0;height:0;border-top:4px solid transparent;border-bottom:4px solid transparent;border-left:4.2px solid #555"></div><svg class="abs" style="left:25px;top:223.7px;overflow:visible" width="13" height="16" viewBox="0 0 13 16"><path d="M1.5 0.5h8l3 3v12.5h-11z" fill="#fdfdfd" stroke="#8a8a8a" stroke-width="0.9"/><path d="M9.5 0.5v3h3" fill="#e8e8e8" stroke="#8a8a8a" stroke-width="0.8"/><circle cx="8.6" cy="5.6" r="2.6" fill="#e01818"/><path d="M3 7.2l3.2-1.5 3 1.3v4l-3 2-3.2-1.6z" fill="#3d78c0" stroke="#1d4478" stroke-width="0.7"/><path d="M3 7.2l3.2 1.6 3-1.8M6.2 8.8v4.2" fill="none" stroke="#1d4478" stroke-width="0.6"/></svg><div class="t" style="left:46px;top:225px;font-size:12px;">arm_robotcad_3_my_2</div><div class="abs" style="left:9px;top:246px;width:0;height:0;border-top:4px solid transparent;border-bottom:4px solid transparent;border-left:4.2px solid #555"></div><svg class="abs" style="left:25px;top:241.7px;overflow:visible" width="13" height="16" viewBox="0 0 13 16"><path d="M1.5 0.5h8l3 3v12.5h-11z" fill="#fdfdfd" stroke="#8a8a8a" stroke-width="0.9"/><path d="M9.5 0.5v3h3" fill="#e8e8e8" stroke="#8a8a8a" stroke-width="0.8"/><circle cx="8.6" cy="5.6" r="2.6" fill="#e01818"/><path d="M3 7.2l3.2-1.5 3 1.3v4l-3 2-3.2-1.6z" fill="#3d78c0" stroke="#1d4478" stroke-width="0.7"/><path d="M3 7.2l3.2 1.6 3-1.8M6.2 8.8v4.2" fill="none" stroke="#1d4478" stroke-width="0.6"/></svg><div class="t" style="left:46px;top:243px;font-size:12px;">multi_func_copter_iron</div><div class="abs" style="left:7px;top:266px;width:0;height:0;border-left:4px solid transparent;border-right:4px solid transparent;border-top:4.5px solid #555"></div><svg class="abs" style="left:25px;top:259.7px;overflow:visible" width="13" height="16" viewBox="0 0 13 16"><path d="M1.5 0.5h8l3 3v12.5h-11z" fill="#fdfdfd" stroke="#8a8a8a" stroke-width="0.9"/><path d="M9.5 0.5v3h3" fill="#e8e8e8" stroke="#8a8a8a" stroke-width="0.8"/><circle cx="8.6" cy="5.6" r="2.6" fill="#e01818"/><path d="M3 7.2l3.2-1.5 3 1.3v4l-3 2-3.2-1.6z" fill="#3d78c0" stroke="#1d4478" stroke-width="0.7"/><path d="M3 7.2l3.2 1.6 3-1.8M6.2 8.8v4.2" fill="none" stroke="#1d4478" stroke-width="0.6"/></svg><div class="t" style="left:46px;top:261px;font-size:12px;font-weight:bold;">mecanum_demo_1_sphere_col</div><div class="abs" style="left:1px;top:277px;width:128px;height:18px;background:#308cc6"></div><div class="abs" style="left:27px;top:284px;width:0;height:0;border-left:4px solid transparent;border-right:4px solid transparent;border-top:4.5px solid #2b2b2b"></div><svg class="abs" style="left:46px;top:282px;overflow:visible" width="11" height="9" viewBox="0 0 13 11"><path d="M0.7 5.5Q6.5 -1.2 12.3 5.5Q6.5 12.2 0.7 5.5z" fill="#1a3a58" stroke="#fff" stroke-width="1.2"/><circle cx="6.5" cy="5.5" r="2.5" fill="#10283c"/><path d="M4.0 4.4a3 3 0 0 1 5 0" stroke="#fff" stroke-width="1.0" fill="none"/></svg><svg class="abs" style="left:68px;top:278px;overflow:visible" width="14" height="16" viewBox="0 0 14 16"><circle cx="8.5" cy="4" r="3.6" fill="#5a93c8" stroke="#3d6c9c" stroke-width="0.6"/><path d="M6.6 4l1.5 1.6 2.6-3" stroke="#fff" stroke-width="1.3" fill="none"/><circle cx="5" cy="6.5" r="1.2" fill="#9ab"/><path d="M2.5 8.3h5M5 7.5v4M5 11.5l-1.3 3.5M5 11.5l1.3 3.5" stroke="#8fa8c0" stroke-width="1.1" fill="none"/></svg><div class="abs" style="left:83px;top:277px;width:46px;height:18px;border:1px dotted rgba(255,255,255,0.22)"></div><div class="t" style="left:86px;top:279px;font-size:12px;color:#fff">Robot</div><div class="abs" style="left:49px;top:300px;width:0;height:0;border-top:4px solid transparent;border-bottom:4px solid transparent;border-left:4.2px solid #555"></div><svg class="abs" style="left:66px;top:299.3px;overflow:visible" width="12" height="10.2" viewBox="0 0 13 11"><path d="M0.7 5.5Q6.5 -1.0 12.3 5.5Q6.5 12.0 0.7 5.5z" fill="none" stroke="#4a4a4a" stroke-width="1.0"/><path d="M4.3 5.5a2.2 2.2 0 0 1 4.4 0" fill="none" stroke="#4a4a4a" stroke-width="0.9"/><path d="M3.2 1.2L10.8 10.8" stroke="#4a4a4a" stroke-width="1.1"/></svg><svg class="abs" style="left:86px;top:296px;overflow:visible" width="13" height="16" viewBox="0 0 13 16"><rect x="5" y="0" width="2.6" height="15" rx="1" fill="#e4e4e4" stroke="#d2d2d2" stroke-width="0.6"/></svg><div class="t" style="left:106px;top:297px;font-size:12px;color:#c2c2c2">l_frame001</div><div class="abs" style="left:49px;top:318px;width:0;height:0;border-top:4px solid transparent;border-bottom:4px solid transparent;border-left:4.2px solid #555"></div><svg class="abs" style="left:66px;top:317.3px;overflow:visible" width="12" height="10.2" viewBox="0 0 13 11"><path d="M0.7 5.5Q6.5 -1.0 12.3 5.5Q6.5 12.0 0.7 5.5z" fill="none" stroke="#4a4a4a" stroke-width="1.0"/><path d="M4.3 5.5a2.2 2.2 0 0 1 4.4 0" fill="none" stroke="#4a4a4a" stroke-width="0.9"/><path d="M3.2 1.2L10.8 10.8" stroke="#4a4a4a" stroke-width="1.1"/></svg><svg class="abs" style="left:86px;top:314px;overflow:visible" width="13" height="16" viewBox="0 0 13 16"><rect x="5" y="0" width="2.6" height="15" rx="1" fill="#e4e4e4" stroke="#d2d2d2" stroke-width="0.6"/></svg><div class="t" style="left:106px;top:315px;font-size:12px;color:#c2c2c2">l_MecanumWheel_L_002</div><div class="abs" style="left:49px;top:336px;width:0;height:0;border-top:4px solid transparent;border-bottom:4px solid transparent;border-left:4.2px solid #555"></div><svg class="abs" style="left:66px;top:335.3px;overflow:visible" width="12" height="10.2" viewBox="0 0 13 11"><path d="M0.7 5.5Q6.5 -1.0 12.3 5.5Q6.5 12.0 0.7 5.5z" fill="none" stroke="#4a4a4a" stroke-width="1.0"/><path d="M4.3 5.5a2.2 2.2 0 0 1 4.4 0" fill="none" stroke="#4a4a4a" stroke-width="0.9"/><path d="M3.2 1.2L10.8 10.8" stroke="#4a4a4a" stroke-width="1.1"/></svg><svg class="abs" style="left:86px;top:332px;overflow:visible" width="13" height="16" viewBox="0 0 13 16"><rect x="5" y="0" width="2.6" height="15" rx="1" fill="#e4e4e4" stroke="#d2d2d2" stroke-width="0.6"/></svg><div class="t" style="left:106px;top:333px;font-size:12px;color:#c2c2c2">l_MecanumWheel_R_002</div><div class="abs" style="left:49px;top:354px;width:0;height:0;border-top:4px solid transparent;border-bottom:4px solid transparent;border-left:4.2px solid #555"></div><svg class="abs" style="left:66px;top:353.3px;overflow:visible" width="12" height="10.2" viewBox="0 0 13 11"><path d="M0.7 5.5Q6.5 -1.0 12.3 5.5Q6.5 12.0 0.7 5.5z" fill="none" stroke="#4a4a4a" stroke-width="1.0"/><path d="M4.3 5.5a2.2 2.2 0 0 1 4.4 0" fill="none" stroke="#4a4a4a" stroke-width="0.9"/><path d="M3.2 1.2L10.8 10.8" stroke="#4a4a4a" stroke-width="1.1"/></svg><svg class="abs" style="left:86px;top:350px;overflow:visible" width="13" height="16" viewBox="0 0 13 16"><rect x="5" y="0" width="2.6" height="15" rx="1" fill="#e4e4e4" stroke="#d2d2d2" stroke-width="0.6"/></svg><div class="t" style="left:106px;top:351px;font-size:12px;color:#c2c2c2">l_MecanumWheel_L_003</div><div class="abs" style="left:49px;top:372px;width:0;height:0;border-top:4px solid transparent;border-bottom:4px solid transparent;border-left:4.2px solid #555"></div><svg class="abs" style="left:66px;top:371.3px;overflow:visible" width="12" height="10.2" viewBox="0 0 13 11"><path d="M0.7 5.5Q6.5 -1.0 12.3 5.5Q6.5 12.0 0.7 5.5z" fill="none" stroke="#4a4a4a" stroke-width="1.0"/><path d="M4.3 5.5a2.2 2.2 0 0 1 4.4 0" fill="none" stroke="#4a4a4a" stroke-width="0.9"/><path d="M3.2 1.2L10.8 10.8" stroke="#4a4a4a" stroke-width="1.1"/></svg><svg class="abs" style="left:86px;top:368px;overflow:visible" width="13" height="16" viewBox="0 0 13 16"><rect x="5" y="0" width="2.6" height="15" rx="1" fill="#e4e4e4" stroke="#d2d2d2" stroke-width="0.6"/></svg><div class="t" style="left:106px;top:369px;font-size:12px;color:#c2c2c2">l_MecanumWheel_R_003</div><svg class="abs" style="left:66px;top:389.3px;overflow:visible" width="12" height="10.2" viewBox="0 0 13 11"><path d="M0.7 5.5Q6.5 -1.0 12.3 5.5Q6.5 12.0 0.7 5.5z" fill="none" stroke="#4a4a4a" stroke-width="1.0"/><path d="M4.3 5.5a2.2 2.2 0 0 1 4.4 0" fill="none" stroke="#4a4a4a" stroke-width="0.9"/><path d="M3.2 1.2L10.8 10.8" stroke="#4a4a4a" stroke-width="1.1"/></svg><svg class="abs" style="left:86px;top:387px;overflow:visible" width="14" height="14" viewBox="0 0 14 14"><rect x="9.2" y="0" width="2.6" height="11" rx="1" fill="#e2e2e2" stroke="#d0d0d0" stroke-width="0.5"/><rect x="0" y="9.3" width="10" height="2.6" rx="1" fill="#e2e2e2" stroke="#d0d0d0" stroke-width="0.5"/><circle cx="10.5" cy="10.6" r="2.4" fill="#e6e6e6" stroke="#cfcfcf" stroke-width="0.5"/></svg><div class="t" style="left:106px;top:387px;font-size:12px;color:#c2c2c2">l_frame001__to__l_Mecanu..</div><svg class="abs" style="left:66px;top:407.3px;overflow:visible" width="12" height="10.2" viewBox="0 0 13 11"><path d="M0.7 5.5Q6.5 -1.0 12.3 5.5Q6.5 12.0 0.7 5.5z" fill="none" stroke="#4a4a4a" stroke-width="1.0"/><path d="M4.3 5.5a2.2 2.2 0 0 1 4.4 0" fill="none" stroke="#4a4a4a" stroke-width="0.9"/><path d="M3.2 1.2L10.8 10.8" stroke="#4a4a4a" stroke-width="1.1"/></svg><svg class="abs" style="left:86px;top:405px;overflow:visible" width="14" height="14" viewBox="0 0 14 14"><rect x="9.2" y="0" width="2.6" height="11" rx="1" fill="#e2e2e2" stroke="#d0d0d0" stroke-width="0.5"/><rect x="0" y="9.3" width="10" height="2.6" rx="1" fill="#e2e2e2" stroke="#d0d0d0" stroke-width="0.5"/><circle cx="10.5" cy="10.6" r="2.4" fill="#e6e6e6" stroke="#cfcfcf" stroke-width="0.5"/></svg><div class="t" style="left:106px;top:405px;font-size:12px;color:#c2c2c2">l_frame001__to__l_Mecanu..</div><svg class="abs" style="left:66px;top:425.3px;overflow:visible" width="12" height="10.2" viewBox="0 0 13 11"><path d="M0.7 5.5Q6.5 -1.0 12.3 5.5Q6.5 12.0 0.7 5.5z" fill="none" stroke="#4a4a4a" stroke-width="1.0"/><path d="M4.3 5.5a2.2 2.2 0 0 1 4.4 0" fill="none" stroke="#4a4a4a" stroke-width="0.9"/><path d="M3.2 1.2L10.8 10.8" stroke="#4a4a4a" stroke-width="1.1"/></svg><svg class="abs" style="left:86px;top:423px;overflow:visible" width="14" height="14" viewBox="0 0 14 14"><rect x="9.2" y="0" width="2.6" height="11" rx="1" fill="#e2e2e2" stroke="#d0d0d0" stroke-width="0.5"/><rect x="0" y="9.3" width="10" height="2.6" rx="1" fill="#e2e2e2" stroke="#d0d0d0" stroke-width="0.5"/><circle cx="10.5" cy="10.6" r="2.4" fill="#e6e6e6" stroke="#cfcfcf" stroke-width="0.5"/></svg><div class="t" style="left:106px;top:423px;font-size:12px;color:#c2c2c2">l_frame001__to__l_Mecanu..</div><svg class="abs" style="left:66px;top:443.3px;overflow:visible" width="12" height="10.2" viewBox="0 0 13 11"><path d="M0.7 5.5Q6.5 -1.0 12.3 5.5Q6.5 12.0 0.7 5.5z" fill="none" stroke="#4a4a4a" stroke-width="1.0"/><path d="M4.3 5.5a2.2 2.2 0 0 1 4.4 0" fill="none" stroke="#4a4a4a" stroke-width="0.9"/><path d="M3.2 1.2L10.8 10.8" stroke="#4a4a4a" stroke-width="1.1"/></svg><svg class="abs" style="left:86px;top:441px;overflow:visible" width="14" height="14" viewBox="0 0 14 14"><rect x="9.2" y="0" width="2.6" height="11" rx="1" fill="#e2e2e2" stroke="#d0d0d0" stroke-width="0.5"/><rect x="0" y="9.3" width="10" height="2.6" rx="1" fill="#e2e2e2" stroke="#d0d0d0" stroke-width="0.5"/><circle cx="10.5" cy="10.6" r="2.4" fill="#e6e6e6" stroke="#cfcfcf" stroke-width="0.5"/></svg><div class="t" style="left:106px;top:441px;font-size:12px;color:#c2c2c2">l_frame001__to__l_Mecanu..</div><svg class="abs" style="left:66px;top:461.3px;overflow:visible" width="12" height="10.2" viewBox="0 0 13 11"><path d="M0.7 5.5Q6.5 -1.0 12.3 5.5Q6.5 12.0 0.7 5.5z" fill="none" stroke="#4a4a4a" stroke-width="1.0"/><path d="M4.3 5.5a2.2 2.2 0 0 1 4.4 0" fill="none" stroke="#4a4a4a" stroke-width="0.9"/><path d="M3.2 1.2L10.8 10.8" stroke="#4a4a4a" stroke-width="1.1"/></svg><svg class="abs" style="left:87px;top:457px;overflow:visible" width="14" height="16" viewBox="0 0 14 16"><path d="M1 0.5L13 5M13 0.5L1 5" stroke="#cfcfcf" stroke-width="0.8" fill="none"/><path d="M1.5 5L6 15M12.5 5L8 15" stroke="#e2e2e2" stroke-width="0.7" fill="none"/><circle cx="7" cy="6.6" r="1.4" fill="#e0e0e0"/><path d="M4.5 8.6h5M7 8v4M7 12l-1.4 3M7 12l1.4 3" stroke="#e0e0e0" stroke-width="1.1" fill="none"/></svg><div class="t" style="left:108px;top:459px;font-size:12px;color:#c2c2c2">mecanum_drive_controller</div><svg class="abs" style="left:66px;top:479.3px;overflow:visible" width="12" height="10.2" viewBox="0 0 13 11"><path d="M0.7 5.5Q6.5 -1.0 12.3 5.5Q6.5 12.0 0.7 5.5z" fill="none" stroke="#4a4a4a" stroke-width="1.0"/><path d="M4.3 5.5a2.2 2.2 0 0 1 4.4 0" fill="none" stroke="#4a4a4a" stroke-width="0.9"/><path d="M3.2 1.2L10.8 10.8" stroke="#4a4a4a" stroke-width="1.1"/></svg><svg class="abs" style="left:87px;top:475px;overflow:visible" width="14" height="16" viewBox="0 0 14 16"><path d="M1 0.5L13 5M13 0.5L1 5" stroke="#cfcfcf" stroke-width="0.8" fill="none"/><path d="M1.5 5L6 15M12.5 5L8 15" stroke="#e2e2e2" stroke-width="0.7" fill="none"/><circle cx="7" cy="6.6" r="1.4" fill="#e0e0e0"/><path d="M4.5 8.6h5M7 8v4M7 12l-1.4 3M7 12l1.4 3" stroke="#e0e0e0" stroke-width="1.1" fill="none"/></svg><div class="t" style="left:108px;top:477px;font-size:12px;color:#c2c2c2">joint_state_broadcaster</div><div class="abs" style="left:29px;top:498px;width:0;height:0;border-top:4px solid transparent;border-bottom:4px solid transparent;border-left:4.2px solid #555"></div><svg class="abs" style="left:46px;top:497.3px;overflow:visible" width="12" height="10.2" viewBox="0 0 13 11"><path d="M0.7 5.5Q6.5 -1.0 12.3 5.5Q6.5 12.0 0.7 5.5z" fill="none" stroke="#4a4a4a" stroke-width="1.0"/><path d="M4.3 5.5a2.2 2.2 0 0 1 4.4 0" fill="none" stroke="#4a4a4a" stroke-width="0.9"/><path d="M3.2 1.2L10.8 10.8" stroke="#4a4a4a" stroke-width="1.1"/></svg><svg class="abs" style="left:66px;top:494px;overflow:visible" width="16" height="16" viewBox="0 0 16 16"><path d="M0.5 1.5h5.5l1.5 2h8v11.5h-15z" fill="#9a9a9a"/><rect x="0.5" y="3.8" width="15" height="11.4" rx="0.8" fill="#a9a9a9"/><rect x="0.5" y="3.8" width="15" height="1" fill="#c8c8c8" opacity="0.5"/></svg><div class="t" style="left:88px;top:495px;font-size:12px;color:#c2c2c2">parts</div><div class="abs" style="left:29px;top:516px;width:0;height:0;border-top:4px solid transparent;border-bottom:4px solid transparent;border-left:4.2px solid #555"></div><svg class="abs" style="left:46px;top:515.3px;overflow:visible" width="12" height="10.2" viewBox="0 0 13 11"><path d="M0.7 5.5Q6.5 -1.2 12.3 5.5Q6.5 12.2 0.7 5.5z" fill="#fff" stroke="#111" stroke-width="1.3"/><circle cx="6.5" cy="5.5" r="2.6" fill="#111"/><path d="M4.6 4.6a2.6 2.6 0 0 1 3.8 0" stroke="#fff" stroke-width="0.9" fill="none"/></svg><svg class="abs" style="left:66px;top:512px;overflow:visible" width="16" height="16" viewBox="0 0 16 16"><path d="M0.5 1.5h5.5l1.5 2h8v11.5h-15z" fill="#1f4a86"/><rect x="0.5" y="3.8" width="15" height="11.4" rx="0.8" fill="#4a7fbd"/><rect x="0.5" y="3.8" width="15" height="1" fill="#7ba7d8" opacity="0.5"/></svg><div class="t" style="left:88px;top:513px;font-size:12px">collisions</div><div class="abs" style="left:131px;top:677px;width:16px;height:1px;background-image:linear-gradient(90deg,#bdbdbd 1px,transparent 1px);background-size:3px 1px"></div><div class="abs" style="left:1px;top:680px;width:275px;height:319px;background:#fff;border:1px solid #bcbcbc"></div><div class="abs" style="left:3px;top:683px;width:257px;height:300px;overflow:hidden"><div class="abs" style="left:0;top:0px;width:257px;height:20px;background:#a0a0a0"></div><div class="t" style="left:3px;top:3px;font-size:12px;font-weight:bold;color:#fff">Base</div><div class="abs" style="left:0;top:20px;width:257px;height:20px;background:#f3f3f3"></div><div class="abs" style="left:0;top:20px;width:20px;height:20px;background:linear-gradient(90deg,#fafafa,#f0f0f0)"></div><div class="abs" style="left:20px;top:39px;width:237px;height:1px;background:#c9c9c9"></div><div class="t" style="left:23px;top:23px;font-size:12px">Label</div><div class="abs" style="left:0;top:40px;width:257px;height:20px;background:#fff"></div><div class="abs" style="left:0;top:40px;width:20px;height:20px;background:linear-gradient(90deg,#fafafa,#f0f0f0)"></div><div class="abs" style="left:20px;top:59px;width:237px;height:1px;background:#c9c9c9"></div><div class="t" style="left:23px;top:43px;font-size:12px">Group</div><div class="abs" style="left:0;top:60px;width:257px;height:20px;background:#f3f3f3"></div><div class="abs" style="left:0;top:60px;width:20px;height:20px;background:linear-gradient(90deg,#fafafa,#f0f0f0)"></div><div class="abs" style="left:20px;top:79px;width:237px;height:1px;background:#c9c9c9"></div><div class="abs" style="left:9px;top:66px;width:0;height:0;border-top:4px solid transparent;border-bottom:4px solid transparent;border-left:4.5px solid #555"></div><div class="t" style="left:23px;top:63px;font-size:12px">Placement</div><div class="abs" style="left:0;top:80px;width:257px;height:20px;background:#a0a0a0"></div><div class="t" style="left:3px;top:83px;font-size:12px;font-weight:bold;color:#fff">Export</div><div class="abs" style="left:0;top:100px;width:257px;height:20px;background:#f3f3f3"></div><div class="abs" style="left:0;top:100px;width:20px;height:20px;background:linear-gradient(90deg,#fafafa,#f0f0f0)"></div><div class="abs" style="left:20px;top:119px;width:237px;height:1px;background:#c9c9c9"></div><div class="t" style="left:23px;top:103px;font-size:12px">Output Path</div><div class="abs" style="left:0;top:120px;width:257px;height:20px;background:#a0a0a0"></div><div class="t" style="left:3px;top:123px;font-size:12px;font-weight:bold;color:#fff">Inertial Parameters</div><div class="abs" style="left:0;top:140px;width:257px;height:20px;background:#fff"></div><div class="abs" style="left:0;top:140px;width:20px;height:20px;background:linear-gradient(90deg,#fafafa,#f0f0f0)"></div><div class="abs" style="left:20px;top:159px;width:237px;height:1px;background:#c9c9c9"></div><div class="abs" style="left:9px;top:146px;width:0;height:0;border-top:4px solid transparent;border-bottom:4px solid transparent;border-left:4.5px solid #555"></div><div class="t" style="left:23px;top:143px;font-size:12px">Center Of Mass Global Coords</div><div class="abs" style="left:0;top:160px;width:257px;height:20px;background:#fff"></div><div class="abs" style="left:0;top:160px;width:20px;height:20px;background:linear-gradient(90deg,#fafafa,#f0f0f0)"></div><div class="abs" style="left:20px;top:179px;width:237px;height:1px;background:#c9c9c9"></div><div class="t" style="left:23px;top:163px;font-size:12px">Mass</div><div class="abs" style="left:0;top:180px;width:257px;height:20px;background:#a0a0a0"></div><div class="t" style="left:3px;top:183px;font-size:12px;font-weight:bold;color:#fff">Internal</div><div class="abs" style="left:0;top:200px;width:257px;height:20px;background:#fff"></div><div class="abs" style="left:0;top:200px;width:20px;height:20px;background:linear-gradient(90deg,#fafafa,#f0f0f0)"></div><div class="abs" style="left:20px;top:219px;width:237px;height:1px;background:#c9c9c9"></div><div class="t" style="left:23px;top:203px;font-size:12px">Created Objects</div><div class="abs" style="left:0;top:220px;width:257px;height:20px;background:#a0a0a0"></div><div class="t" style="left:3px;top:223px;font-size:12px;font-weight:bold;color:#fff">Joint Values</div><div class="abs" style="left:0;top:240px;width:257px;height:20px;background:#fff"></div><div class="abs" style="left:0;top:240px;width:20px;height:20px;background:linear-gradient(90deg,#fafafa,#f0f0f0)"></div><div class="abs" style="left:20px;top:259px;width:237px;height:1px;background:#c9c9c9"></div><div class="t" style="left:23px;top:243px;font-size:12px">l_frame001__to__l_ Mecanum Wheel_ H</div><div class="abs" style="left:0;top:260px;width:257px;height:20px;background:#f3f3f3"></div><div class="abs" style="left:0;top:260px;width:20px;height:20px;background:linear-gradient(90deg,#fafafa,#f0f0f0)"></div><div class="abs" style="left:20px;top:279px;width:237px;height:1px;background:#c9c9c9"></div><div class="t" style="left:23px;top:263px;font-size:12px">l_frame001__to__l_ Mecanum Wheel_ H</div><div class="abs" style="left:0;top:280px;width:257px;height:20px;background:#fff"></div><div class="abs" style="left:0;top:280px;width:20px;height:20px;background:linear-gradient(90deg,#fafafa,#f0f0f0)"></div><div class="abs" style="left:20px;top:299px;width:237px;height:1px;background:#c9c9c9"></div><div class="t" style="left:23px;top:283px;font-size:12px">l_frame001__to__l_ Mecanum Wheel_ H</div></div><div class="abs" style="left:260px;top:683px;width:13px;height:300px;background:#e9e9e9;border-left:1px solid #d0d0d0"></div><div class="abs" style="left:260px;top:683px;width:13px;height:14px;background:#f4f4f4;border:1px solid #d0d0d0"></div><div class="abs" style="left:263px;top:687px;width:0;height:0;border-left:4px solid transparent;border-right:4px solid transparent;border-bottom:4px solid #555"></div><div class="abs" style="left:260px;top:697px;width:13px;height:186px;background:#fafafa;border:1px solid #d6d6d6"></div><div class="abs" style="left:260px;top:883px;width:13px;height:87px;background:#dedede;border:1px solid #cacaca"></div><div class="abs" style="left:262px;top:973px;width:0;height:0;border-left:4px solid transparent;border-right:4px solid transparent;border-top:4px solid #555"></div><div class="abs" style="left:3px;top:983px;width:257px;height:14px;background:#dedede;border:1px solid #cacaca"></div><div class="abs" style="left:3px;top:983px;width:14px;height:14px;background:#f4f4f4;border:1px solid #d0d0d0"></div><div class="abs" style="left:7px;top:986px;width:0;height:0;border-top:4px solid transparent;border-bottom:4px solid transparent;border-right:4px solid #555"></div><div class="abs" style="left:17px;top:983px;width:149px;height:14px;background:#f6f6f6;border:1px solid #d0d0d0"></div><div class="abs" style="left:246px;top:983px;width:14px;height:14px;background:#f4f4f4;border:1px solid #d0d0d0"></div><div class="abs" style="left:251px;top:986px;width:0;height:0;border-top:4px solid transparent;border-bottom:4px solid transparent;border-left:4px solid #555"></div><div class="abs" style="left:260px;top:983px;width:13px;height:14px;background:#efefef"></div><div class="abs" style="left:1px;top:999px;width:53px;height:22px;background:linear-gradient(#e6e6e6,#dcdcdc);border:1px solid #c0c0c0;border-top:none;border-radius:0 0 3px 3px"></div><div class="t" style="left:12px;top:1003px;font-size:12px">View</div><div class="abs" style="left:54px;top:998px;width:52px;height:26px;background:#f7f7f7;border:1px solid #c0c0c0;border-top:none;border-radius:0 0 3px 3px"></div><div class="t" style="left:65px;top:1004px;font-size:12px">Data</div><div class="abs" style="left:277px;top:160px;width:5px;height:866px;background:#efefef"></div><div class="abs" style="left:279px;top:586px;width:1px;height:16px;background-image:linear-gradient(#9c9c9c 1px,transparent 1px);background-size:1px 3px"></div><div class="abs" style="left:282px;top:993px;width:1638px;height:33px;background:#efefef"></div><div class="abs" style="left:282px;top:993px;width:1638px;height:1px;background:#fbfbfb"></div><div class="abs" style="left:282px;top:994px;width:1638px;height:1px;background:#c4c4c4"></div><div class="abs" style="left:283px;top:994px;width:214px;height:28px;background:linear-gradient(#e4e4e4,#dadada);border:1px solid #c2c2c2;border-top:none;border-radius:0 0 3px 3px"></div><svg class="abs" style="left:296px;top:1000px;overflow:visible" width="11" height="14" viewBox="0 0 13 16"><path d="M1.5 0.5h8l3 3v12.5h-11z" fill="#fdfdfd" stroke="#8a8a8a" stroke-width="0.9"/><path d="M9.5 0.5v3h3" fill="#e8e8e8" stroke="#8a8a8a" stroke-width="0.8"/><circle cx="8.6" cy="5.6" r="2.6" fill="#e01818"/><path d="M3 7.2l3.2-1.5 3 1.3v4l-3 2-3.2-1.6z" fill="#3d78c0" stroke="#1d4478" stroke-width="0.7"/><path d="M3 7.2l3.2 1.6 3-1.8M6.2 8.8v4.2" fill="none" stroke="#1d4478" stroke-width="0.6"/></svg><div class="t" style="left:314px;top:1001px;font-size:12px">diff_drive_from_user : 1*</div><svg class="abs" style="left:468px;top:1002px;overflow:visible" width="12" height="12" viewBox="0 0 12 12"><path d="M1.5 1.5L10.5 10.5M10.5 1.5L1.5 10.5" stroke="#111" stroke-width="1.9" stroke-linecap="round"/><path d="M1.5 1.5Q6 5 10.5 1.5M1.5 10.5Q6 7 10.5 10.5" stroke="#111" stroke-width="0.8" fill="none"/></svg><div class="abs" style="left:497px;top:994px;width:229px;height:28px;background:linear-gradient(#e4e4e4,#dadada);border:1px solid #c2c2c2;border-top:none;border-radius:0 0 3px 3px"></div><svg class="abs" style="left:510px;top:1000px;overflow:visible" width="11" height="14" viewBox="0 0 13 16"><path d="M1.5 0.5h8l3 3v12.5h-11z" fill="#fdfdfd" stroke="#8a8a8a" stroke-width="0.9"/><path d="M9.5 0.5v3h3" fill="#e8e8e8" stroke="#8a8a8a" stroke-width="0.8"/><circle cx="8.6" cy="5.6" r="2.6" fill="#e01818"/><path d="M3 7.2l3.2-1.5 3 1.3v4l-3 2-3.2-1.6z" fill="#3d78c0" stroke="#1d4478" stroke-width="0.7"/><path d="M3 7.2l3.2 1.6 3-1.8M6.2 8.8v4.2" fill="none" stroke="#1d4478" stroke-width="0.6"/></svg><div class="t" style="left:529px;top:1001px;font-size:12px">arm_robotcad_3_my_2 : 1*</div><svg class="abs" style="left:696px;top:1002px;overflow:visible" width="12" height="12" viewBox="0 0 12 12"><path d="M1.5 1.5L10.5 10.5M10.5 1.5L1.5 10.5" stroke="#111" stroke-width="1.9" stroke-linecap="round"/><path d="M1.5 1.5Q6 5 10.5 1.5M1.5 10.5Q6 7 10.5 10.5" stroke="#111" stroke-width="0.8" fill="none"/></svg><div class="abs" style="left:726px;top:994px;width:230px;height:28px;background:linear-gradient(#e4e4e4,#dadada);border:1px solid #c2c2c2;border-top:none;border-radius:0 0 3px 3px"></div><svg class="abs" style="left:739px;top:1000px;overflow:visible" width="11" height="14" viewBox="0 0 13 16"><path d="M1.5 0.5h8l3 3v12.5h-11z" fill="#fdfdfd" stroke="#8a8a8a" stroke-width="0.9"/><path d="M9.5 0.5v3h3" fill="#e8e8e8" stroke="#8a8a8a" stroke-width="0.8"/><circle cx="8.6" cy="5.6" r="2.6" fill="#e01818"/><path d="M3 7.2l3.2-1.5 3 1.3v4l-3 2-3.2-1.6z" fill="#3d78c0" stroke="#1d4478" stroke-width="0.7"/><path d="M3 7.2l3.2 1.6 3-1.8M6.2 8.8v4.2" fill="none" stroke="#1d4478" stroke-width="0.6"/></svg><div class="t" style="left:758px;top:1001px;font-size:12px">multi_func_copter_iron : 1*</div><svg class="abs" style="left:927px;top:1002px;overflow:visible" width="12" height="12" viewBox="0 0 12 12"><path d="M1.5 1.5L10.5 10.5M10.5 1.5L1.5 10.5" stroke="#111" stroke-width="1.9" stroke-linecap="round"/><path d="M1.5 1.5Q6 5 10.5 1.5M1.5 10.5Q6 7 10.5 10.5" stroke="#111" stroke-width="0.8" fill="none"/></svg><div class="abs" style="left:957px;top:994px;width:276px;height:30px;background:#f6f6f6;border:1px solid #c2c2c2;border-top:none;border-radius:0 0 3px 3px"></div><svg class="abs" style="left:970px;top:1001px;overflow:visible" width="11" height="14" viewBox="0 0 13 16"><path d="M1.5 0.5h8l3 3v12.5h-11z" fill="#fdfdfd" stroke="#8a8a8a" stroke-width="0.9"/><path d="M9.5 0.5v3h3" fill="#e8e8e8" stroke="#8a8a8a" stroke-width="0.8"/><circle cx="8.6" cy="5.6" r="2.6" fill="#e01818"/><path d="M3 7.2l3.2-1.5 3 1.3v4l-3 2-3.2-1.6z" fill="#3d78c0" stroke="#1d4478" stroke-width="0.7"/><path d="M3 7.2l3.2 1.6 3-1.8M6.2 8.8v4.2" fill="none" stroke="#1d4478" stroke-width="0.6"/></svg><div class="t" style="left:988px;top:1002px;font-size:12px">mecanum_demo_1_sphere_col : 1*</div><svg class="abs" style="left:1203px;top:1003px;overflow:visible" width="12" height="12" viewBox="0 0 12 12"><path d="M1.5 1.5L10.5 10.5M10.5 1.5L1.5 10.5" stroke="#111" stroke-width="1.9" stroke-linecap="round"/><path d="M1.5 1.5Q6 5 10.5 1.5M1.5 10.5Q6 7 10.5 10.5" stroke="#111" stroke-width="0.8" fill="none"/></svg><svg class="abs" style="left:282px;top:160px" width="1638" height="833" viewBox="282 160 1638 833" shape-rendering="auto"><defs><linearGradient id="bg" x1="0" y1="0" x2="0" y2="1"><stop offset="0" stop-color="#333365"/><stop offset="1" stop-color="#a9a9bf"/></linearGradient>
<linearGradient id="rg" x1="0" y1="0" x2="0" y2="1"><stop offset="0" stop-color="#2e2f2a"/><stop offset="0.15" stop-color="#54554d"/><stop offset="0.4" stop-color="#85867c"/><stop offset="0.5" stop-color="#9a9b90"/><stop offset="0.62" stop-color="#707168"/><stop offset="0.88" stop-color="#42433c"/><stop offset="1" stop-color="#282924"/></linearGradient>
<linearGradient id="rgd" x1="0" y1="0" x2="0" y2="1"><stop offset="0" stop-color="#2a2b26"/><stop offset="0.35" stop-color="#64655c"/><stop offset="0.7" stop-color="#45463f"/><stop offset="1" stop-color="#23241f"/></linearGradient>
<radialGradient id="sph" cx="0.45" cy="0.4" r="0.6"><stop offset="0" stop-color="#d0d0d8" stop-opacity="0.42"/><stop offset="0.8" stop-color="#b0b0c0" stop-opacity="0.34"/><stop offset="1" stop-color="#9090a8" stop-opacity="0.38"/></radialGradient>
<radialGradient id="sph2" cx="0.45" cy="0.4" r="0.6"><stop offset="0" stop-color="#d4d4d8" stop-opacity="0.5"/><stop offset="0.8" stop-color="#bcbcc4" stop-opacity="0.5"/><stop offset="1" stop-color="#a0a0b0" stop-opacity="0.55"/></radialGradient>
</defs><rect x="282" y="160" width="1638" height="833" fill="url(#bg)"/><polygon points="620.5,588.5 709.0,640.0 709.0,650.0 620.8,597.5" fill="#777786" stroke="#101014" stroke-width="1.6" stroke-linejoin="round" /><polygon points="726.7,650.6 986.7,806.4 987.0,817.5 726.9,662.3" fill="#777786" stroke="#101014" stroke-width="1.6" stroke-linejoin="round" /><polygon points="1005.0,816.0 1093.6,868.0 1095.0,882.0 1005.7,828.7" fill="#777786" stroke="#101014" stroke-width="1.6" stroke-linejoin="round" /><polygon points="726.7,650.6 726.9,662.3 712.0,672.0 709.0,661.0" fill="#9a9aab" stroke="#101014" stroke-width="1.4" stroke-linejoin="round" /><polygon points="1005.0,816.0 1005.7,828.7 990.0,839.0 988.0,827.0" fill="#9a9aab" stroke="#101014" stroke-width="1.4" stroke-linejoin="round" /><polygon points="1093.6,868.0 1449.2,608.0 1450.0,621.3 1095.0,882.0" fill="#878795" stroke="#101014" stroke-width="1.6" stroke-linejoin="round" /><polygon points="975.6,327.0 1067.3,380.0 1080.0,372.0 1094.0,381.3 1081.3,390.0 1343.3,544.0 1356.0,536.5 1373.7,546.4 1359.6,554.6 1449.2,608.0 1093.6,868.0 1005.0,816.0 990.0,827.0 972.0,817.0 986.7,806.4 726.7,650.6 712.0,661.0 694.0,651.0 709.0,640.0 620.5,588.5" fill="#9897a9" /><line x1="620.5" y1="588.5" x2="975.6" y2="327.0" stroke="#101014" stroke-width="1.7" stroke-linecap="round"/><line x1="975.6" y1="327.0" x2="1067.3" y2="380.0" stroke="#101014" stroke-width="1.7" stroke-linecap="round"/><line x1="1081.3" y1="390.0" x2="1094.0" y2="381.3" stroke="#101014" stroke-width="1.7" stroke-linecap="round"/><line x1="1081.3" y1="390.0" x2="1343.3" y2="544.0" stroke="#101014" stroke-width="1.7" stroke-linecap="round"/><line x1="1359.6" y1="554.6" x2="1373.7" y2="546.4" stroke="#101014" stroke-width="1.7" stroke-linecap="round"/><line x1="1359.6" y1="554.6" x2="1449.2" y2="608.0" stroke="#101014" stroke-width="1.7" stroke-linecap="round"/><line x1="1449.2" y1="608.0" x2="1093.6" y2="868.0" stroke="#101014" stroke-width="1.7" stroke-linecap="round"/><line x1="620.5" y1="588.5" x2="709.0" y2="640.0" stroke="#101014" stroke-width="1.7" stroke-linecap="round"/><line x1="709.0" y1="640.0" x2="694.0" y2="651.0" stroke="#101014" stroke-width="1.7" stroke-linecap="round"/><line x1="726.7" y1="650.6" x2="986.7" y2="806.4" stroke="#101014" stroke-width="1.7" stroke-linecap="round"/><line x1="986.7" y1="806.4" x2="972.0" y2="817.0" stroke="#101014" stroke-width="1.7" stroke-linecap="round"/><line x1="1005.0" y1="816.0" x2="1093.6" y2="868.0" stroke="#101014" stroke-width="1.7" stroke-linecap="round"/><ellipse cx="880.5" cy="526" rx="4.5" ry="2.6" fill="#1212d0" transform="rotate(-30 880.5 526)"/><ellipse cx="1159" cy="691" rx="4.5" ry="2.6" fill="#1212d0" transform="rotate(-30 1159 691)"/><polygon points="1072.1,364.1 989.3,316.0 987.7,318.8 1069.9,367.9" fill="#14d214" /><polygon points="990.4,314.2 946.0,292.4 986.6,320.7" fill="#14d214" /><polygon points="988.5,317.4 946.0,292.4 986.6,320.7" fill="#0c9a0c" /><circle cx="1120.8" cy="359.1" r="50.1" fill="url(#sph)"/><polygon points="1090.4,320.4 1098.0,311.5 1110.7,309.0 1115.8,303.9 1131.0,302.7 1136.0,307.7 1143.6,317.9 1153.8,320.4 1161.4,328.0 1162.6,343.2 1171.5,349.6 1174.0,355.9 1170.2,366.0 1172.8,373.6 1166.4,386.3 1151.2,397.7 1131.0,404.0 1123.4,404.0 1113.2,396.4 1103.1,396.4 1098.0,386.3 1092.9,371.1 1091.7,355.9 1089.1,340.7" fill="#44453e" stroke="#1b1c18" stroke-width="1.3" stroke-linejoin="round"/><polygon points="1091.7,345.8 1108.2,344.5 1123.4,361.0 1131.0,378.7 1128.4,402.8 1113.2,396.4 1103.1,396.4 1098.0,386.3 1092.9,371.1" fill="#86877b" stroke="#1b1c18" stroke-width="0.8" stroke-linejoin="round"/><polygon points="1098.0,371.1 1113.2,366.0 1125.9,378.7 1123.4,401.5 1113.2,396.4 1103.1,396.4" fill="#6b6c62"/><polygon points="1089.8,328.0 1096.7,325.5 1099.3,331.8 1092.9,336.2" fill="#ecece2"/><polygon points="1113.2,349.6 1132.2,340.7 1132.2,362.2 1123.4,355.9" fill="#ecece2"/><polygon points="1092.3,366.0 1103.1,362.9 1108.8,373.0 1098.0,379.3" fill="#ecece2"/><polygon points="1152.5,339.4 1157.6,343.2 1156.3,349.6 1153.1,347.0" fill="#ecece2"/><polyline points="1132.9,305.8 1141.1,314.7 1158.8,322.3 1161.4,331.8" fill="none" stroke="#1b1c18" stroke-width="2.2" stroke-linejoin="round" stroke-linecap="round"/><polyline points="1133.5,307.1 1141.1,315.3 1158.2,323.2" fill="none" stroke="#f0f0e8" stroke-width="0.8" stroke-linejoin="round" stroke-dasharray="1.2 1.6"/><polyline points="1092.9,348.3 1109.4,353.4 1123.4,368.6 1129.1,388.8" fill="none" stroke="#1b1c18" stroke-width="2.0" stroke-linejoin="round" stroke-linecap="round"/><polyline points="1096.7,349.6 1112.0,357.2 1122.1,372.4 1125.9,390.1" fill="none" stroke="#e0e0d6" stroke-width="0.8" stroke-linejoin="round" stroke-linecap="round"/><polyline points="1101.8,396.4 1113.2,388.8 1125.9,391.4 1136.0,386.3" fill="none" stroke="#1b1c18" stroke-width="1.5" stroke-linejoin="round" stroke-linecap="round"/><polyline points="1114.5,355.9 1131.0,366.0 1143.6,368.6" fill="none" stroke="#1b1c18" stroke-width="1.6" stroke-linejoin="round" stroke-linecap="round"/><polyline points="1119.6,364.8 1133.5,381.2 1141.1,391.4" fill="none" stroke="#1b1c18" stroke-width="1.4" stroke-linejoin="round" stroke-linecap="round"/><polyline points="1120.8,366.0 1134.8,383.8" fill="none" stroke="#e0e0d6" stroke-width="0.7" stroke-linejoin="round" stroke-dasharray="1 1.4"/><ellipse cx="1102.4" cy="326.7" rx="12.0" ry="14.6" fill="#3a3b35" stroke="#1b1c18" stroke-width="0.9" transform="rotate(20.0 1102.4 326.7)"/><rect x="1104.0" y="312.5" width="35.5" height="20.9" rx="8.8" ry="10.5" fill="url(#rg)" stroke="#1b1c18" stroke-width="0.8" transform="rotate(91.0 1121.8 322.9)"/><rect x="1120.6" y="334.7" width="46.6" height="19.0" rx="8.0" ry="9.5" fill="url(#rg)" stroke="#1b1c18" stroke-width="0.8" transform="rotate(97.0 1143.9 344.2)"/><rect x="1133.5" y="362.7" width="45.1" height="14.2" rx="6.0" ry="7.1" fill="url(#rg)" stroke="#1b1c18" stroke-width="0.8" transform="rotate(115.8 1156.0 369.8)"/><rect x="1142.6" y="380.7" width="35.0" height="9.9" rx="4.2" ry="4.9" fill="url(#rgd)" stroke="#1b1c18" stroke-width="0.8" transform="rotate(130.6 1160.1 385.7)"/><circle cx="1098.0" cy="326.7" r="6.6" fill="#2e2f2a" stroke="#1b1c18" stroke-width="0.9"/><circle cx="1098.0" cy="326.7" r="3.8" fill="#55564e"/><circle cx="1098.0" cy="326.7" r="1.6" fill="#2a2b26"/><circle cx="1120.8" cy="342.0" r="5.8" fill="#2e2f2a" stroke="#1b1c18" stroke-width="0.9"/><circle cx="1120.8" cy="342.0" r="3.0" fill="#5e5f56"/><circle cx="1120.8" cy="342.0" r="1.3" fill="#2a2b26"/><circle cx="1108.8" cy="361.0" r="4.6" fill="#2a2b26"/><circle cx="1108.8" cy="360.6" r="1.8" fill="#ecece2"/><circle cx="1110.7" cy="386.3" r="5.3" fill="#2a2b26"/><circle cx="1110.9" cy="385.7" r="2.2" fill="#ecece2"/><ellipse cx="1138.6" cy="367.3" rx="7.6" ry="2.8" fill="#22231e" transform="rotate(10.0 1138.6 367.3)"/><circle cx="1169.0" cy="350.8" r="2.8" fill="#1e1f1b"/><circle cx="1167.7" cy="373.6" r="2.5" fill="#1e1f1b"/><path d="M1094.2 388.8 Q1125.9 397.7 1160.1 374.9 M1163.3 338.2 Q1174.0 354.6 1165.2 369.8 " fill="none" stroke="#ece648" stroke-width="1.1" stroke-linecap="round"/><polygon points="1082.5,322.8 1065.0,391.8 1090.6,374.3" fill="#0a0a9c" /><polygon points="1082.5,322.8 1065.0,391.8 1080.0,372.0" fill="#0e0ea8" /><polygon points="1093.5,373.7 1079.6,268.1 1076.1,268.5 1087.7,374.3" fill="#dc1414" /><polygon points="1082.1,267.8 1072.4,223.0 1073.6,268.8" fill="#dc1414" /><polygon points="1077.9,268.3 1072.4,223.0 1073.6,268.8" fill="#a80e0e" /><polygon points="1349.6,529.1 1267.5,480.8 1265.9,483.5 1347.4,532.9" fill="#14d214" /><polygon points="1268.6,478.9 1224.6,457.0 1264.8,485.4" fill="#14d214" /><polygon points="1266.7,482.2 1224.6,457.0 1264.8,485.4" fill="#0c9a0c" /><circle cx="1399.6" cy="522.8" r="51.3" fill="url(#sph)"/><polygon points="1365.3,493.0 1372.9,482.9 1388.2,471.5 1394.5,467.7 1403.4,467.7 1408.4,476.5 1421.1,475.3 1427.4,480.3 1427.4,490.5 1438.8,496.8 1446.4,504.4 1447.7,514.6 1453.4,526.0 1452.8,537.4 1447.7,547.5 1438.8,548.8 1436.3,556.4 1426.2,562.7 1416.0,565.2 1405.9,571.6 1395.8,570.3 1388.2,564.0 1381.8,556.4 1376.7,546.2 1370.4,536.1 1367.9,520.9 1365.3,505.7" fill="#44453e" stroke="#1b1c18" stroke-width="1.3" stroke-linejoin="round"/><polygon points="1367.9,508.2 1381.8,503.2 1395.8,520.9 1403.4,536.1 1405.9,553.8 1403.4,570.3 1395.8,570.3 1388.2,564.0 1381.8,556.4 1376.7,546.2 1370.4,536.1" fill="#86877b" stroke="#1b1c18" stroke-width="0.8" stroke-linejoin="round"/><polygon points="1378.0,543.7 1390.7,536.1 1403.4,546.2 1403.4,569.0 1395.8,570.3 1388.2,564.0" fill="#6b6c62"/><polygon points="1403.4,515.8 1422.4,522.2 1412.2,537.4 1405.9,533.6" fill="#ecece2"/><polygon points="1419.8,494.3 1428.7,496.2 1431.2,500.6 1421.1,498.7" fill="#ecece2"/><polygon points="1371.7,531.0 1383.1,527.9 1388.8,538.6 1376.7,544.3" fill="#ecece2"/><polygon points="1411.0,556.4 1417.9,555.1 1419.2,562.7 1413.5,564.2" fill="#ecece2"/><polygon points="1393.2,503.2 1399.6,500.6 1399.6,514.6" fill="#d8d8cc"/><polyline points="1394.5,467.7 1399.6,475.3 1407.2,475.3" fill="none" stroke="#1b1c18" stroke-width="2.2" stroke-linejoin="round" stroke-linecap="round"/><polyline points="1395.8,468.9 1400.8,474.0 1405.9,474.0" fill="none" stroke="#f0f0e8" stroke-width="0.8" stroke-linejoin="round" stroke-dasharray="1.2 1.6"/><polyline points="1421.1,475.3 1427.4,486.7 1443.9,501.9 1447.7,513.3" fill="none" stroke="#1b1c18" stroke-width="2.2" stroke-linejoin="round" stroke-linecap="round"/><polyline points="1422.4,477.2 1428.1,487.3 1443.3,501.9 1446.7,512.0" fill="none" stroke="#f0f0e8" stroke-width="0.8" stroke-linejoin="round" stroke-dasharray="1.2 1.6"/><polyline points="1369.1,505.7 1385.6,514.6 1398.3,533.6 1403.4,551.3" fill="none" stroke="#1b1c18" stroke-width="2.0" stroke-linejoin="round" stroke-linecap="round"/><polyline points="1379.3,499.3 1395.8,523.4" fill="none" stroke="#f0f0e8" stroke-width="0.9" stroke-linejoin="round" stroke-dasharray="1.2 1.6"/><polyline points="1378.0,503.2 1394.5,526.0 1399.6,543.7" fill="none" stroke="#e0e0d6" stroke-width="0.7" stroke-linejoin="round" stroke-linecap="round"/><polyline points="1395.8,499.3 1399.6,504.4 1400.8,531.0 1406.5,545.0" fill="none" stroke="#1b1c18" stroke-width="2.0" stroke-linejoin="round" stroke-linecap="round"/><polyline points="1378.0,555.1 1390.7,546.2 1403.4,551.3 1416.0,548.8" fill="none" stroke="#1b1c18" stroke-width="1.5" stroke-linejoin="round" stroke-linecap="round"/><polyline points="1372.9,520.9 1381.8,536.1 1380.5,553.8" fill="none" stroke="#1b1c18" stroke-width="1.3" stroke-linejoin="round" stroke-linecap="round"/><rect x="1366.5" y="475.3" width="32.0" height="13.9" rx="5.9" ry="7.0" fill="url(#rgd)" stroke="#1b1c18" stroke-width="0.8" transform="rotate(-33.7 1382.4 482.2)"/><rect x="1375.5" y="479.5" width="47.6" height="17.7" rx="7.5" ry="8.9" fill="url(#rg)" stroke="#1b1c18" stroke-width="0.8" transform="rotate(-2.6 1399.2 488.4)"/><rect x="1399.2" y="501.2" width="46.9" height="19.0" rx="8.0" ry="9.5" fill="url(#rg)" stroke="#1b1c18" stroke-width="0.8" transform="rotate(9.3 1422.7 510.8)"/><rect x="1417.1" y="524.7" width="35.2" height="20.3" rx="8.5" ry="10.1" fill="url(#rgd)" stroke="#1b1c18" stroke-width="0.8" transform="rotate(8.3 1434.7 534.8)"/><rect x="1414.3" y="549.4" width="23.7" height="12.7" rx="5.3" ry="6.3" fill="url(#rgd)" stroke="#1b1c18" stroke-width="0.8" transform="rotate(-15.5 1426.2 555.7)"/><ellipse cx="1417.0" cy="532.5" rx="5.3" ry="7.6" fill="#2a2b26" stroke="#1b1c18" stroke-width="0.9" transform="rotate(10.0 1417.0 532.5)"/><ellipse cx="1416.0" cy="532.9" rx="2.8" ry="4.3" fill="#55564e" transform="rotate(10.0 1416.0 532.9)"/><circle cx="1415.8" cy="533.1" r="1.3" fill="#22231e"/><ellipse cx="1419.6" cy="556.4" rx="4.6" ry="5.6" fill="#22231e" stroke="#1b1c18" stroke-width="0.8" transform="rotate(-15.0 1419.6 556.4)"/><circle cx="1419.3" cy="556.4" r="1.8" fill="#4a4b44"/><circle cx="1386.2" cy="526.6" r="4.6" fill="#2a2b26"/><circle cx="1386.6" cy="526.0" r="1.8" fill="#ecece2"/><circle cx="1388.8" cy="551.3" r="5.3" fill="#2a2b26"/><circle cx="1389.4" cy="550.7" r="2.0" fill="#ecece2"/><polygon points="1408.4,533.6 1414.8,531.0 1417.5,537.6 1411.0,541.4" fill="#ecece2" stroke="#1b1c18" stroke-width="0.8" stroke-linejoin="round"/><circle cx="1449.0" cy="526.0" r="3.0" fill="#1e1f1b"/><path d="M1372.3 554.5 Q1408.4 562.7 1441.4 537.4 Q1450.2 526.0 1447.7 514.6 " fill="none" stroke="#ece648" stroke-width="1.1" stroke-linecap="round"/><polygon points="1361.3,486.8 1342.0,557.0 1369.7,539.4" fill="#0a0a9c" /><polygon points="1361.3,486.8 1342.0,557.0 1358.0,536.0" fill="#0e0ea8" /><polygon points="1372.4,538.6 1358.1,433.3 1354.5,433.7 1366.6,539.4" fill="#dc1414" /><polygon points="1360.5,433.0 1350.6,388.3 1352.1,434.0" fill="#dc1414" /><polygon points="1356.3,433.5 1350.6,388.3 1352.1,434.0" fill="#a80e0e" /><polygon points="669.1,641.1 595.1,599.6 593.6,602.4 666.9,644.9" fill="#14d214" /><polygon points="596.2,597.8 556.4,579.4 592.5,604.3" fill="#14d214" /><polygon points="594.3,601.0 556.4,579.4 592.5,604.3" fill="#0c9a0c" /><circle cx="673.4" cy="685.8" r="50.4" fill="url(#sph2)"/><polygon points="617.0,674.4 630.3,656.7 641.7,646.5 653.2,638.9 660.8,637.7 665.8,642.7 676.0,640.2 682.3,646.5 686.1,656.7 703.8,661.7 708.9,666.8 706.4,675.7 715.2,685.8 718.4,693.4 715.2,711.2 706.4,723.8 693.7,730.2 686.1,731.4 683.6,739.0 668.4,742.2 660.8,736.5 646.8,728.9 637.9,722.6 635.4,713.7 626.5,706.1 621.5,696.0 625.3,685.8" fill="#44453e" stroke="#1b1c18" stroke-width="1.3" stroke-linejoin="round"/><polygon points="617.7,674.4 632.9,666.8 655.7,685.8 668.4,707.4 670.9,723.8 663.3,736.5 646.8,728.9 637.9,722.6 635.4,713.7 626.5,706.1 621.5,696.0 625.3,685.8" fill="#86877b" stroke="#1b1c18" stroke-width="0.8" stroke-linejoin="round"/><polygon points="635.4,713.7 646.8,706.1 660.8,713.7 668.4,726.4 663.3,736.5 646.8,728.9" fill="#6b6c62"/><polygon points="659.5,679.5 682.3,683.3 671.5,701.7 665.8,693.4" fill="#ecece2"/><polygon points="676.0,721.3 683.6,718.8 686.1,726.4 679.8,730.4" fill="#ecece2"/><polygon points="665.8,734.2 676.0,733.3 676.2,740.3 668.4,741.1" fill="#ecece2"/><polygon points="643.0,696.2 655.7,694.1 656.3,702.5 646.8,707.6" fill="#ecece2"/><polygon points="678.5,658.2 688.6,661.1 701.3,663.0 698.8,666.8 683.6,663.0" fill="#86877b"/><polyline points="631.0,655.4 632.2,665.5 655.7,685.8" fill="none" stroke="#1b1c18" stroke-width="2.4" stroke-linejoin="round" stroke-linecap="round"/><polyline points="636.0,666.8 655.7,684.3" fill="none" stroke="#f0f0e8" stroke-width="0.9" stroke-linejoin="round" stroke-dasharray="1.2 1.6"/><polyline points="617.7,674.4 636.7,677.0 643.0,690.9" fill="none" stroke="#1b1c18" stroke-width="1.8" stroke-linejoin="round" stroke-linecap="round"/><polyline points="653.2,663.0 654.7,677.0 667.1,706.1" fill="none" stroke="#1b1c18" stroke-width="2.4" stroke-linejoin="round" stroke-linecap="round"/><polyline points="656.3,678.2 667.3,704.6" fill="none" stroke="#f0f0e8" stroke-width="0.9" stroke-linejoin="round" stroke-dasharray="1.2 1.6"/><polyline points="676.0,641.5 681.0,650.3 686.1,657.7 703.8,662.8" fill="none" stroke="#1b1c18" stroke-width="2.2" stroke-linejoin="round" stroke-linecap="round"/><polyline points="658.2,640.2 660.8,644.0" fill="none" stroke="#f0f0e8" stroke-width="0.9" stroke-linejoin="round" stroke-dasharray="1.2 1.6"/><polyline points="703.8,662.8 705.4,675.7 716.5,687.1" fill="none" stroke="#1b1c18" stroke-width="2.2" stroke-linejoin="round" stroke-linecap="round"/><polyline points="706.4,678.2 715.2,687.1" fill="none" stroke="#f0f0e8" stroke-width="0.8" stroke-linejoin="round" stroke-dasharray="1.2 1.6"/><polyline points="625.3,685.8 640.5,690.9 641.7,706.1 658.2,721.3 670.9,725.1" fill="none" stroke="#1b1c18" stroke-width="1.4" stroke-linejoin="round" stroke-linecap="round"/><polyline points="637.9,722.6 646.8,716.2 660.8,726.4 662.0,736.5" fill="none" stroke="#1b1c18" stroke-width="1.3" stroke-linejoin="round" stroke-linecap="round"/><polyline points="668.4,707.4 676.0,701.0 676.0,713.7 669.6,723.8" fill="none" stroke="#1b1c18" stroke-width="1.8" stroke-linejoin="round" stroke-linecap="round"/><rect x="632.0" y="648.8" width="48.7" height="16.5" rx="6.9" ry="8.2" fill="url(#rg)" stroke="#1b1c18" stroke-width="0.8" transform="rotate(-15.8 656.3 657.0)"/><rect x="655.4" y="662.4" width="46.9" height="19.0" rx="8.0" ry="9.5" fill="url(#rg)" stroke="#1b1c18" stroke-width="0.8" transform="rotate(9.3 678.8 671.9)"/><rect x="680.4" y="686.8" width="37.3" height="24.1" rx="10.1" ry="12.0" fill="url(#rgd)" stroke="#1b1c18" stroke-width="0.8" transform="rotate(14.7 699.1 698.8)"/><rect x="675.9" y="710.2" width="30.5" height="16.5" rx="6.9" ry="8.2" fill="url(#rgd)" stroke="#1b1c18" stroke-width="0.8" transform="rotate(-3.6 691.2 718.4)"/><ellipse cx="677.5" cy="692.8" rx="5.1" ry="7.9" fill="#24251f" stroke="#1b1c18" stroke-width="0.9" transform="rotate(18.0 677.5 692.8)"/><ellipse cx="676.0" cy="692.8" rx="2.0" ry="3.8" fill="#8c8d82" transform="rotate(18.0 676.0 692.8)"/><circle cx="687.4" cy="719.4" r="6.6" fill="#24251f" stroke="#1b1c18" stroke-width="0.9"/><circle cx="686.7" cy="719.4" r="3.5" fill="#55564e"/><circle cx="686.5" cy="719.4" r="1.5" fill="#1e1f1b"/><circle cx="631.0" cy="697.5" r="3.8" fill="#2a2b26"/><circle cx="643.0" cy="696.0" r="3.8" fill="#2a2b26"/><circle cx="649.6" cy="696.6" r="2.5" fill="#ecece2"/><circle cx="652.9" cy="720.0" r="3.8" fill="#2a2b26"/><circle cx="655.7" cy="719.4" r="1.8" fill="#ecece2"/><circle cx="635.4" cy="696.0" r="1.5" fill="#d8d8cc"/><polyline points="635.4,719.4 638.7,719.4" fill="none" stroke="#ece648" stroke-width="1.2" stroke-linejoin="round" stroke-linecap="round"/><g opacity="0.75"><line x1="709.0" y1="661.0" x2="726.7" y2="650.6" stroke="#101014" stroke-width="1.4" stroke-linecap="round"/><line x1="726.7" y1="650.6" x2="726.9" y2="662.3" stroke="#101014" stroke-width="1.4" stroke-linecap="round"/><line x1="726.9" y1="662.3" x2="712.0" y2="672.0" stroke="#101014" stroke-width="1.4" stroke-linecap="round"/></g><polygon points="692.0,608.7 681.0,655.0 701.0,657.8" fill="#0a0a9c" /><polygon points="703.1,657.4 688.9,553.6 685.3,554.0 697.3,658.2" fill="#dc1414" /><polygon points="691.3,553.2 681.5,509.2 682.9,554.3" fill="#dc1414" /><polygon points="687.1,553.8 681.5,509.2 682.9,554.3" fill="#a80e0e" /><polygon points="651.3,699.9 492.5,813.5 496.8,819.7 655.7,706.1" fill="#1414dc" /><polygon points="488.3,807.7 405.3,880.5 501.1,825.5" fill="#1414dc" /><polygon points="494.7,816.6 405.3,880.5 501.1,825.5" fill="#0c0cb0" /><polygon points="934.6,800.1 870.2,763.1 868.6,765.9 932.4,803.9" fill="#14d214" /><polygon points="871.3,761.3 833.4,743.4 867.5,767.7" fill="#14d214" /><polygon points="869.4,764.5 833.4,743.4 867.5,767.7" fill="#0c9a0c" /><circle cx="950.9" cy="853.4" r="50.4" fill="url(#sph2)"/><polygon points="894.5,849.6 898.9,835.6 904.0,822.9 912.9,816.6 923.0,814.1 928.1,806.5 935.7,802.7 948.4,802.7 953.4,811.5 963.6,811.5 973.7,819.1 983.8,835.6 991.4,845.8 986.4,858.4 996.5,867.3 991.4,878.7 978.8,893.9 961.0,905.3 953.4,905.3 945.8,897.7 935.7,904.0 930.6,902.8 926.8,888.8 910.3,876.2 904.0,863.5 895.1,855.9" fill="#44453e" stroke="#1b1c18" stroke-width="1.3" stroke-linejoin="round"/><polygon points="895.1,849.6 916.7,839.4 938.2,861.0 956.0,881.2 953.4,904.0 945.8,897.7 935.7,904.0 930.6,902.8 926.8,888.8 910.3,876.2 904.0,863.5 895.1,855.9" fill="#86877b" stroke="#1b1c18" stroke-width="0.8" stroke-linejoin="round"/><polygon points="910.3,876.2 923.0,866.0 938.2,878.7 945.8,897.7 935.7,904.0 930.6,902.8 926.8,888.8" fill="#6b6c62"/><polygon points="901.5,830.8 909.1,826.7 913.1,833.3 905.3,838.4" fill="#ecece2"/><polygon points="923.0,837.1 945.8,835.6 945.8,855.9 938.2,850.8 926.8,843.9" fill="#ecece2"/><polygon points="966.1,830.3 974.0,839.7 967.4,846.0" fill="#ecece2"/><polygon points="944.6,864.8 957.5,866.0 958.7,879.0 948.4,873.9" fill="#ecece2"/><polygon points="928.1,861.2 935.7,858.4 935.9,868.8 929.3,871.3" fill="#ecece2"/><polyline points="944.6,806.5 953.4,812.2 956.0,819.1" fill="none" stroke="#1b1c18" stroke-width="2.0" stroke-linejoin="round" stroke-linecap="round"/><polyline points="947.1,809.0 953.4,815.3" fill="none" stroke="#f0f0e8" stroke-width="0.8" stroke-linejoin="round" stroke-dasharray="1.2 1.6"/><polyline points="966.1,815.3 976.2,829.3 986.4,843.2 990.4,847.3" fill="none" stroke="#1b1c18" stroke-width="2.2" stroke-linejoin="round" stroke-linecap="round"/><polyline points="967.4,818.5 976.5,831.8 986.4,845.1" fill="none" stroke="#f0f0e8" stroke-width="0.9" stroke-linejoin="round" stroke-dasharray="1.2 1.6"/><polyline points="920.5,840.7 926.8,853.4 938.2,861.0 957.2,881.5" fill="none" stroke="#1b1c18" stroke-width="2.2" stroke-linejoin="round" stroke-linecap="round"/><polyline points="938.9,859.1 957.5,879.3" fill="none" stroke="#f0f0e8" stroke-width="0.9" stroke-linejoin="round" stroke-linecap="round"/><polyline points="896.4,849.6 910.3,843.2 921.1,838.4" fill="none" stroke="#1b1c18" stroke-width="1.8" stroke-linejoin="round" stroke-linecap="round"/><polyline points="898.9,835.6 907.8,845.8 905.3,861.0" fill="none" stroke="#1b1c18" stroke-width="1.4" stroke-linejoin="round" stroke-linecap="round"/><polyline points="897.0,844.5 904.0,861.0" fill="none" stroke="#f0f0e8" stroke-width="0.8" stroke-linejoin="round" stroke-dasharray="1.2 1.6"/><polyline points="923.0,858.4 926.8,871.1 935.7,886.3 933.2,902.8" fill="none" stroke="#1b1c18" stroke-width="1.6" stroke-linejoin="round" stroke-linecap="round"/><polyline points="910.3,866.0 923.0,871.1 930.6,886.3" fill="none" stroke="#1b1c18" stroke-width="1.3" stroke-linejoin="round" stroke-linecap="round"/><polyline points="938.2,878.7 948.4,886.3 953.4,904.0" fill="none" stroke="#1b1c18" stroke-width="1.4" stroke-linejoin="round" stroke-linecap="round"/><polyline points="986.4,858.4 981.3,866.0" fill="none" stroke="#1b1c18" stroke-width="1.6" stroke-linejoin="round" stroke-linecap="round"/><ellipse cx="914.4" cy="825.7" rx="10.1" ry="8.6" fill="#3a3b35" stroke="#1b1c18" stroke-width="0.9" transform="rotate(-20.0 914.4 825.7)"/><rect x="916.3" y="812.3" width="36.6" height="20.3" rx="8.5" ry="10.1" fill="url(#rgd)" stroke="#1b1c18" stroke-width="0.8" transform="rotate(93.6 934.5 822.4)"/><rect x="933.1" y="825.2" width="46.3" height="21.5" rx="9.0" ry="10.8" fill="url(#rg)" stroke="#1b1c18" stroke-width="0.8" transform="rotate(93.1 956.2 835.9)"/><rect x="951.0" y="854.9" width="43.2" height="17.7" rx="7.5" ry="8.9" fill="url(#rg)" stroke="#1b1c18" stroke-width="0.8" transform="rotate(107.4 972.6 863.8)"/><rect x="952.5" y="879.5" width="44.0" height="11.4" rx="4.8" ry="5.7" fill="url(#rgd)" stroke="#1b1c18" stroke-width="0.8" transform="rotate(132.0 974.5 885.2)"/><circle cx="912.2" cy="826.5" r="5.8" fill="#24251f" stroke="#1b1c18" stroke-width="0.9"/><circle cx="912.2" cy="826.5" r="3.3" fill="#55564e"/><circle cx="912.2" cy="826.5" r="1.4" fill="#1e1f1b"/><circle cx="933.8" cy="834.6" r="6.3" fill="#24251f" stroke="#1b1c18" stroke-width="0.9"/><circle cx="934.2" cy="834.6" r="3.5" fill="#55564e"/><circle cx="934.4" cy="834.6" r="1.5" fill="#1e1f1b"/><ellipse cx="954.1" cy="857.8" rx="7.6" ry="3.8" fill="#1b1c18" transform="rotate(5.0 954.1 857.8)"/><circle cx="989.2" cy="867.5" r="1.8" fill="#ecece2"/><circle cx="912.9" cy="862.2" r="1.8" fill="#d8d8cc"/><circle cx="933.2" cy="891.4" r="3.0" fill="#2a2b26"/><polyline points="913.1,884.4 916.7,884.4" fill="none" stroke="#ece648" stroke-width="1.2" stroke-linejoin="round" stroke-linecap="round"/><g opacity="0.75"><line x1="988.0" y1="827.0" x2="1005.0" y2="816.0" stroke="#101014" stroke-width="1.4" stroke-linecap="round"/><line x1="1005.0" y1="816.0" x2="1005.7" y2="828.7" stroke="#101014" stroke-width="1.4" stroke-linecap="round"/><line x1="1005.7" y1="828.7" x2="990.0" y2="839.0" stroke="#101014" stroke-width="1.4" stroke-linecap="round"/></g><polygon points="969.4,775.5 960.4,810.5 978.6,823.6" fill="#0a0a9c" /><polygon points="981.5,823.2 967.4,719.4 963.8,719.8 975.7,824.0" fill="#dc1414" /><polygon points="969.8,719.1 960.0,675.0 961.4,720.1" fill="#dc1414" /><polygon points="965.6,719.6 960.0,675.0 961.4,720.1" fill="#a80e0e" /><polygon points="928.8,863.6 770.0,977.2 774.3,983.4 933.2,869.8" fill="#1414dc" /><polygon points="765.8,971.4 682.8,1044.2 778.6,989.2" fill="#1414dc" /><polygon points="772.2,980.3 682.8,1044.2 778.6,989.2" fill="#0c0cb0" /><g opacity="0.98"><polygon points="1837.2,178.9 1848.1,166.4 1859.1,178.9" fill="#7d7da4"/><polygon points="1836.4,284.9 1859.8,284.9 1848.1,297.4" fill="#7d7da4"/><polygon points="1782.6,231.9 1795.6,221.0 1795.6,243.6" fill="#7d7da4"/><polygon points="1901.2,221.0 1913.7,231.9 1901.2,243.6" fill="#7d7da4"/><circle cx="1905.1" cy="174.6" r="6.2" fill="#7d7da4"/><path d="M1828.6 173.4 Q1811.5 178.9 1800.9 191.8 L1797.1 189.0 L1799.0 200.2 L1812.3 196.0 L1807.6 194.5 Q1816.9 185.1 1831.0 180.4 Z" fill="#7d7da4"/><path d="M1867.6 173.4 Q1884.8 178.9 1895.4 191.8 L1899.2 189.0 L1897.3 200.2 L1884.0 196.0 L1888.7 194.5 Q1879.3 185.1 1865.3 180.4 Z" fill="#7d7da4"/><polygon points="1841.1,189.8 1853.6,189.8 1874.7,203.0 1884.8,215.5 1888.2,234.2 1887.1,245.2 1875.4,259.2 1856.7,273.2 1844.2,273.2 1822.4,261.1 1811.5,249.8 1808.0,228.0 1807.6,221.8 1816.2,208.0" fill="#8686aa" stroke="#2d2f45" stroke-width="1.0" stroke-linejoin="round"/><polyline points="1816.5,214.0 1838.0,226.4 1849.7,226.4 1873.9,211.2" fill="none" stroke="#2d2f45" stroke-width="0.9" stroke-linejoin="round" stroke-linecap="round"/><polyline points="1816.5,214.0 1816.2,208.0" fill="none" stroke="#2d2f45" stroke-width="0.9" stroke-linejoin="round" stroke-linecap="round"/><polyline points="1873.9,211.2 1874.7,203.0" fill="none" stroke="#2d2f45" stroke-width="0.9" stroke-linejoin="round" stroke-linecap="round"/><polyline points="1838.0,226.4 1835.7,235.8 1841.9,244.4 1852.0,244.4 1855.2,235.0 1849.7,226.4" fill="none" stroke="#2d2f45" stroke-width="0.9" stroke-linejoin="round" stroke-linecap="round"/><polyline points="1835.7,235.8 1813.0,224.1 1808.0,228.0" fill="none" stroke="#2d2f45" stroke-width="0.9" stroke-linejoin="round" stroke-linecap="round"/><polyline points="1813.0,224.1 1816.5,214.0" fill="none" stroke="#2d2f45" stroke-width="0.9" stroke-linejoin="round" stroke-linecap="round"/><polyline points="1855.2,235.0 1884.8,218.6 1884.8,215.5" fill="none" stroke="#2d2f45" stroke-width="0.9" stroke-linejoin="round" stroke-linecap="round"/><polyline points="1884.8,218.6 1873.9,211.2" fill="none" stroke="#2d2f45" stroke-width="0.9" stroke-linejoin="round" stroke-linecap="round"/><polyline points="1841.9,244.4 1844.2,273.2" fill="none" stroke="#2d2f45" stroke-width="0.9" stroke-linejoin="round" stroke-linecap="round"/><polyline points="1852.0,244.4 1855.5,273.2" fill="none" stroke="#2d2f45" stroke-width="0.9" stroke-linejoin="round" stroke-linecap="round"/><polygon points="1882.5,274.0 1892.6,269.3 1902.7,274.0 1902.7,284.2 1892.6,288.8 1882.5,284.2" fill="#8686aa" stroke="#2d2f45" stroke-width="0.9" stroke-linejoin="round"/><polyline points="1882.5,274.0 1892.6,278.7 1902.7,274.0" fill="none" stroke="#2d2f45" stroke-width="0.9" stroke-linejoin="round" stroke-linecap="round"/><polyline points="1892.6,278.7 1892.6,288.8" fill="none" stroke="#2d2f45" stroke-width="0.9" stroke-linejoin="round" stroke-linecap="round"/></g><text x="0" y="0" transform="translate(1845.0 211.2) rotate(-32) skewX(-20)" font-family="DejaVu Sans,Liberation Sans,sans-serif" font-size="10" fill="#555b75" text-anchor="middle">TOP</text><text x="0" y="0" transform="translate(1824.7 251.4) rotate(27) skewX(20)" font-family="DejaVu Sans,Liberation Sans,sans-serif" font-size="9.5" fill="#555b75" text-anchor="middle">LEFT</text><text x="0" y="0" transform="translate(1871.1 249.1) rotate(-32) skewX(-18)" font-family="DejaVu Sans,Liberation Sans,sans-serif" font-size="9.5" fill="#555b75" text-anchor="middle">FRONT</text><polyline points="1846.9,252.2 1850.5,285.7" fill="none" stroke="#1414e0" stroke-width="1.8" stroke-linejoin="round" stroke-linecap="round"/><polyline points="1815.7,269.3 1844.2,285.7" fill="none" stroke="#10c010" stroke-width="1.6" stroke-linejoin="round" stroke-linecap="round"/><polyline points="1887.9,263.9 1859.8,284.2" fill="none" stroke="#d02020" stroke-width="1.4" stroke-linejoin="round" stroke-linecap="round"/><polyline points="1878.0,951.1 1876.1,931.2" fill="none" stroke="#10109a" stroke-width="1.6" stroke-linejoin="round" stroke-linecap="round"/><polygon points="1875.4,926.2 1874.0,936.9 1878.5,936.9" fill="#10109a"/><polyline points="1878.0,951.1 1891.0,941.9" fill="none" stroke="#a01818" stroke-width="1.4" stroke-linejoin="round" stroke-linecap="round"/><polygon points="1895.6,939.0 1888.5,940.9 1891.7,945.1" fill="#a01818"/><polyline points="1878.0,951.1 1865.4,944.3" fill="none" stroke="#108a10" stroke-width="1.4" stroke-linejoin="round" stroke-linecap="round"/><polygon points="1860.9,941.2 1868.3,942.3 1865.7,946.6" fill="#108a10"/><text x="1879.1" y="923.4" font-family="DejaVu Sans,Liberation Sans,sans-serif" font-weight="bold" font-size="8.5" fill="#000" text-anchor="middle">Z</text><text x="1899.7" y="937.6" font-family="DejaVu Sans,Liberation Sans,sans-serif" font-weight="bold" font-size="8.5" fill="#000" text-anchor="middle">X</text><text x="1864.9" y="939.5" font-family="DejaVu Sans,Liberation Sans,sans-serif" font-weight="bold" font-size="8.5" fill="#000" text-anchor="middle">Y</text></svg></body></html>
